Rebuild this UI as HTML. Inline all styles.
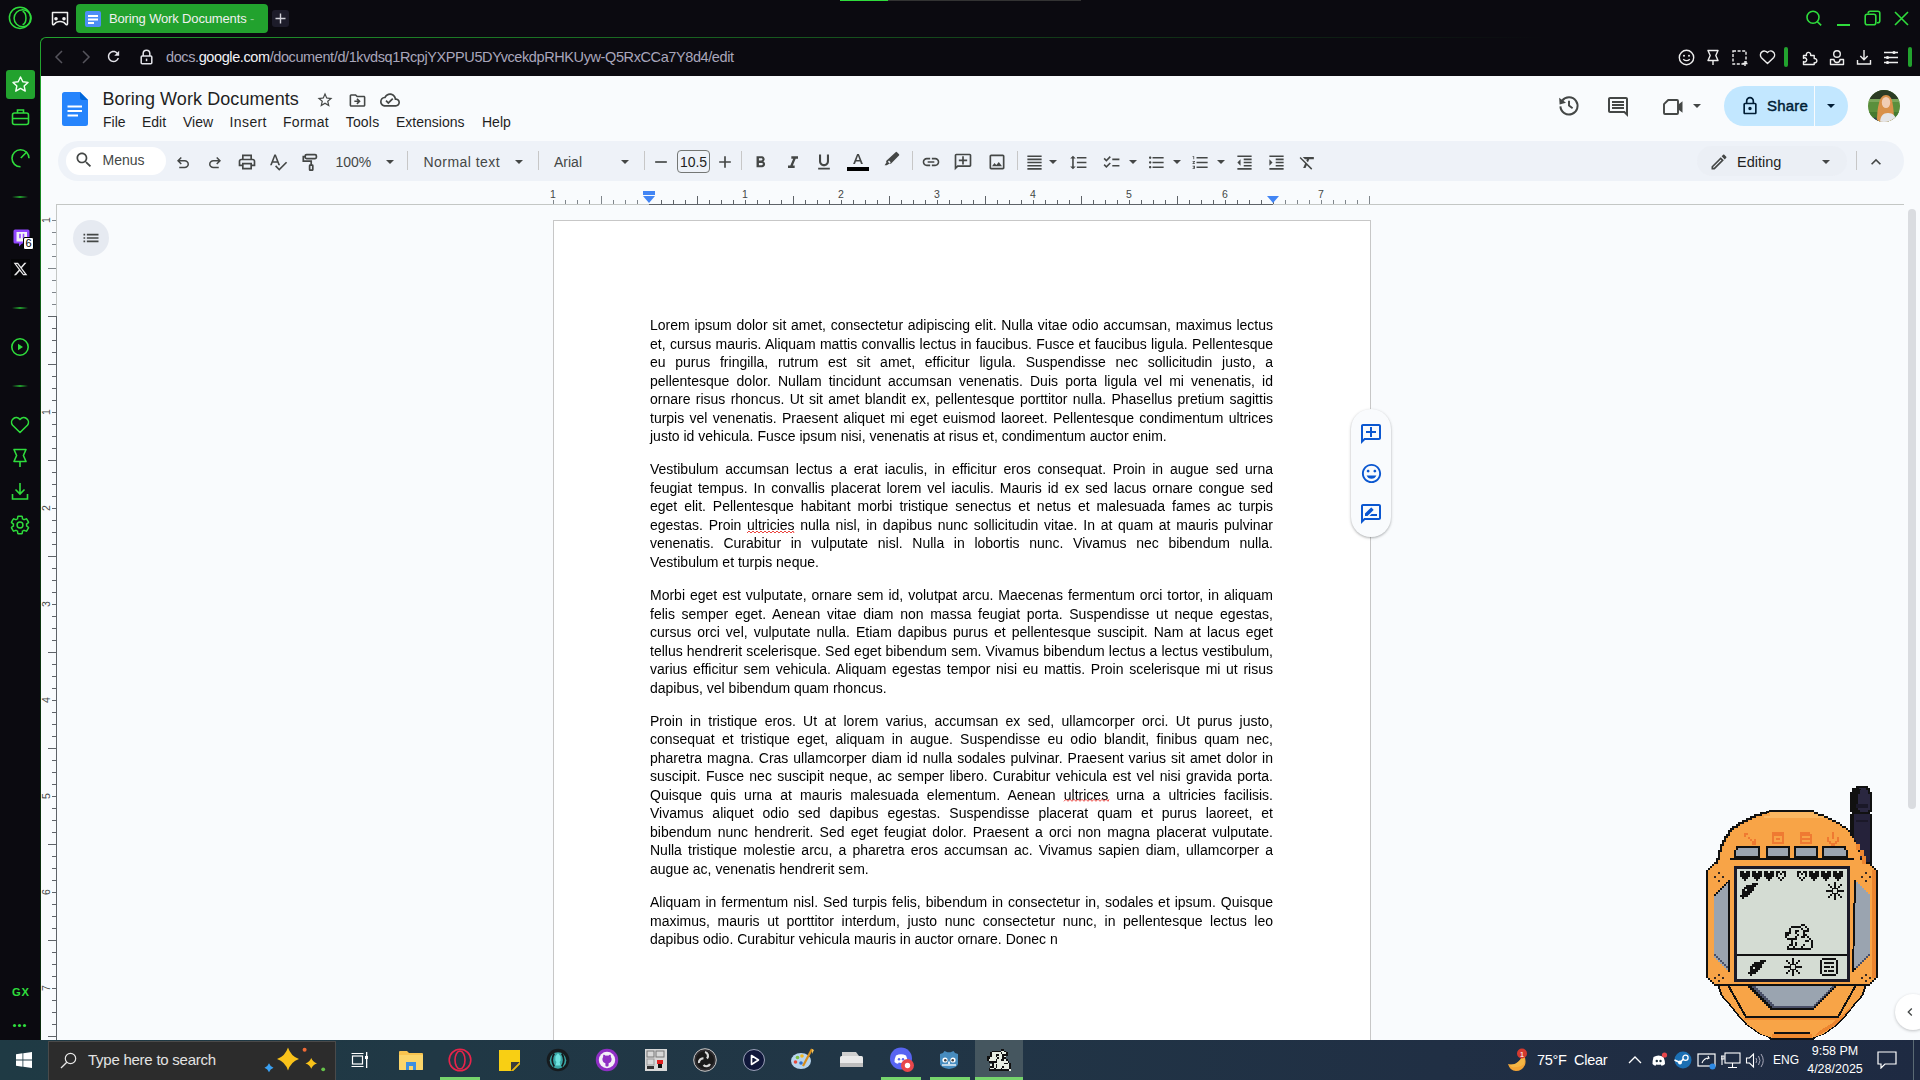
<!DOCTYPE html>
<html><head><meta charset="utf-8">
<style>
*{box-sizing:border-box;margin:0;padding:0}
html,body{width:1920px;height:1080px;overflow:hidden;background:#0b0a10;font-family:"Liberation Sans",sans-serif}
.a{position:absolute}
svg{display:block}
.gx{stroke:#2fdc3c;fill:none;stroke-width:1.6}
.ic{fill:#444746}
.mi{position:absolute;font-size:14px;color:#1f1f1f;top:114px;line-height:17px}
.tb{position:absolute;font-size:14px;color:#444746;line-height:17px}
.sep{position:absolute;width:1px;height:19px;top:151px;background:#c7c7c7}
.dd{position:absolute;width:0;height:0;border-left:4.5px solid transparent;border-right:4.5px solid transparent;border-top:4.5px solid #444746}
.doc{position:absolute;left:650px;width:623px;font-size:14px;line-height:18.5px;color:#000;will-change:transform}
.doc div{text-align:justify;text-align-last:justify;white-space:nowrap;height:18.5px}
.doc div.l{text-align-last:left}
.sq{}
</style></head><body>
<!-- TAB BAR -->
<div id="tabbar" class="a" style="left:0;top:0;width:1920px;height:37px;background:#0b0a10"></div>
<div class="a" style="left:840px;top:0;width:48px;height:1px;background:#2fdc3c"></div>
<div class="a" style="left:888px;top:0;width:193px;height:1px;background:#333"></div>
<!-- opera logo -->
<svg class="a" style="left:0;top:0" width="40" height="36" viewBox="0 0 40 36"><circle cx="20" cy="17.8" r="10.6" fill="none" stroke="#2fdc3c" stroke-width="1.5"/><circle cx="22.6" cy="18.2" r="8.5" fill="none" stroke="#2fdc3c" stroke-width="1.5"/><path d="M22.6 11.2A4.4 7 0 0 1 22.6 24.8" fill="none" stroke="#2fdc3c" stroke-width="1.5"/></svg>
<!-- gamepad -->
<svg class="a" style="left:48px;top:8px" width="24" height="20" viewBox="0 0 24 20"><path d="M4.5 4.5h15v11.5a.8.8 0 0 1-1.3.6L15.8 14.4q-3.8-1.6-7.6 0L5.8 16.6a.8.8 0 0 1-1.3-.6z" fill="none" stroke="#f0f0f0" stroke-width="1.5" stroke-linejoin="round"/><circle cx="8" cy="10.7" r="1.8" fill="#f0f0f0"/><circle cx="16" cy="10.7" r="1.8" fill="#f0f0f0"/></svg>
<!-- tab -->
<div class="a" style="left:76px;top:4px;width:192px;height:29px;background:#22a22e;border-radius:4px"></div>
<svg class="a" style="left:85px;top:11px" width="16" height="16" viewBox="0 0 16 16"><rect width="16" height="16" rx="2" fill="#4d8ef7"/><rect x="3" y="4" width="10" height="2" fill="#fff"/><rect x="3" y="7.5" width="10" height="2" fill="#fff"/><rect x="3" y="11" width="6" height="2" fill="#fff"/></svg>
<div id="tabt" class="a" style="left:109px;top:11px;font-size:13px;letter-spacing:-0.15px;color:#f0f0f0;line-height:16px;white-space:nowrap">Boring Work Documents <span style="color:#8fcf94">-</span></div>
<div class="a" style="left:272px;top:10px;width:17px;height:17px;background:#1d1c2a;border-radius:3px"></div>
<svg class="a" style="left:274px;top:12px" width="13" height="13" viewBox="0 0 13 13"><path d="M6.5 1.5v10M1.5 6.5h10" stroke="#d0d0d8" stroke-width="1.4"/></svg>
<!-- window controls -->
<svg class="a" style="left:1804px;top:9px" width="20" height="20" viewBox="0 0 20 20"><circle cx="9" cy="8.3" r="6" class="gx" stroke-width="1.5"/><path d="M13.3 12.6L17.2 16.3" class="gx" stroke-width="1.5"/></svg>
<div class="a" style="left:1837px;top:24px;width:13px;height:1.5px;background:#2fdc3c"></div>
<svg class="a" style="left:1864px;top:10px" width="17" height="17" viewBox="0 0 17 17"><rect x="1.2" y="4.2" width="10.6" height="10.6" rx="2" class="gx" stroke-width="1.4"/><path d="M4.2 3.6V3.2a2 2 0 0 1 2-2h7.6a2 2 0 0 1 2 2v7.6a2 2 0 0 1-2 2h-1" class="gx" stroke-width="1.4"/></svg>
<svg class="a" style="left:1894px;top:11px" width="15" height="15" viewBox="0 0 15 15"><path d="M1 1L14 14M14 1L1 14" class="gx" stroke-width="1.4"/></svg>

<!-- BROWSER FRAME -->
<div class="a" style="left:40px;top:37px;width:1890px;height:1010px;background:#0b0a10"></div>
<div class="a" style="left:40px;top:42px;width:1px;height:998px;background:linear-gradient(180deg,#22a22e 0px,#22a22e 60px,#157a1e 200px,#0c3a10 360px,#0a2a0c 1000px)"></div>
<div class="a" style="left:46px;top:37px;width:1874px;height:1px;background:linear-gradient(90deg,#22a22e 0%,#1a6a22 30%,#123818 55%,#0b0a10 80%)"></div>
<div class="a" style="left:40px;top:37px;width:8px;height:8px;border-left:1px solid #22a22e;border-top:1px solid #22a22e;border-top-left-radius:6px"></div>
<div class="a" style="left:41px;top:76px;width:1879px;height:964px;background:#f9fbfd"></div>


<!-- ADDRESS BAR -->
<svg class="a" style="left:53px;top:50px" width="12" height="14" viewBox="0 0 12 14"><path d="M9 1L3 7l6 6" fill="none" stroke="#55545c" stroke-width="1.5"/></svg>
<svg class="a" style="left:80px;top:50px" width="12" height="14" viewBox="0 0 12 14"><path d="M3 1l6 6-6 6" fill="none" stroke="#55545c" stroke-width="1.5"/></svg>
<svg class="a" style="left:105px;top:48px" width="17" height="17" viewBox="0 0 24 24"><path d="M17.65 6.35C16.2 4.9 14.21 4 12 4c-4.42 0-7.99 3.58-7.99 8s3.57 8 7.99 8c3.73 0 6.84-2.55 7.73-6h-2.08c-.82 2.33-3.04 4-5.65 4-3.31 0-6-2.69-6-6s2.69-6 6-6c1.66 0 3.14.69 4.22 1.78L13 11h7V4l-2.35 2.35z" fill="#e4e4ea"/></svg>
<svg class="a" style="left:140px;top:49px" width="13" height="16" viewBox="0 0 13 16"><path d="M3.2 7V4.6a3.3 3.3 0 0 1 6.6 0V7" fill="none" stroke="#e4e4ea" stroke-width="1.5"/><rect x="1.2" y="7" width="10.6" height="7.8" rx="1" fill="none" stroke="#e4e4ea" stroke-width="1.5"/><rect x="5.8" y="9.6" width="1.5" height="2.6" fill="#e4e4ea"/></svg>
<div id="url" class="a" style="left:166px;top:48px;font-size:14.5px;line-height:18px;color:#a9a6bb;white-space:nowrap;letter-spacing:-0.4px">docs.<span style="color:#f2f2f6">google.com</span>/document/d/1kvdsq1RcpjYXPPU5DYvcekdpRHKUyw-Q5RxCCa7Y8d4/edit</div>
<!-- right address icons -->
<svg class="a" style="left:1678px;top:49px" width="17" height="17" viewBox="0 0 17 17"><circle cx="8.5" cy="8.5" r="7.2" fill="none" stroke="#eee" stroke-width="1.4"/><circle cx="6" cy="6.8" r="1" fill="#eee"/><circle cx="11" cy="6.8" r="1" fill="#eee"/><path d="M5.2 10.2q3.3 2.8 6.6 0" fill="none" stroke="#eee" stroke-width="1.3"/></svg>
<svg class="a" style="left:1705px;top:49px" width="16" height="17" viewBox="0 0 16 17"><path d="M3 1.5h10l-2.2 5 2.2 5H3l2.2-5z" fill="none" stroke="#eee" stroke-width="1.4" stroke-linejoin="round"/><path d="M8 11.5v4.5" stroke="#eee" stroke-width="1.4"/></svg>
<svg class="a" style="left:1732px;top:50px" width="17" height="17" viewBox="0 0 17 17"><path d="M1 1h13v13H1z" fill="none" stroke="#eee" stroke-width="1.4" stroke-dasharray="3 1.6"/><path d="M13 11v5M10.5 13.5h5" stroke="#eee" stroke-width="1.4"/></svg>
<svg class="a" style="left:1759px;top:50px" width="17" height="15" viewBox="0 0 17 15"><path d="M8.5 13.5L2.2 7.4A3.6 3.6 0 0 1 8.5 2.6a3.6 3.6 0 0 1 6.3 4.8z" fill="none" stroke="#eee" stroke-width="1.4" stroke-linejoin="round"/></svg>
<div class="a" style="left:1784px;top:47px;width:4px;height:20px;background:#22a22e;border-radius:2px"></div>
<svg class="a" style="left:1802px;top:49px" width="18" height="17" viewBox="0 0 18 17"><path d="M1.5 6.5h3a2.2 2.2 0 1 1 4.2-.8V6.5h3.5v3a2.2 2.2 0 1 1 0 4.3V15.5H1.5v-3a2 2 0 1 0 0-3.2z" fill="none" stroke="#eee" stroke-width="1.4" stroke-linejoin="round"/></svg>
<svg class="a" style="left:1829px;top:49px" width="16" height="17" viewBox="0 0 16 17"><circle cx="8" cy="5" r="3.3" fill="none" stroke="#eee" stroke-width="1.4"/><path d="M1.5 10.5h3.5a3 3 0 0 0 6 0h3.5v5h-13z" fill="none" stroke="#eee" stroke-width="1.4" stroke-linejoin="round"/></svg>
<svg class="a" style="left:1856px;top:49px" width="16" height="17" viewBox="0 0 16 17"><path d="M8 1v9.5M4.3 7l3.7 3.7L11.7 7M1.5 11v4h13v-4" fill="none" stroke="#eee" stroke-width="1.4"/></svg>
<svg class="a" style="left:1883px;top:50px" width="16" height="15" viewBox="0 0 16 15"><path d="M1 2.5h14M1 7.5h14M1 12.5h14" stroke="#eee" stroke-width="1.4"/><circle cx="11" cy="2.5" r="1.6" fill="#eee"/><circle cx="4.5" cy="7.5" r="1.6" fill="#eee"/><circle cx="4.5" cy="12.5" r="1.6" fill="#eee"/></svg>
<div class="a" style="left:1908px;top:47px;width:4px;height:20px;background:#22a22e;border-radius:2px"></div>

<!-- LEFT SIDEBAR -->
<div class="a" style="left:6px;top:70px;width:29px;height:29px;background:#22a22e;border-radius:3px"></div>
<svg class="a" style="left:11px;top:75px" width="19" height="19" viewBox="0 0 24 24"><path d="M12 2.5l2.9 6.1 6.6.7-4.9 4.5 1.4 6.6L12 17l-6 3.4 1.4-6.6-4.9-4.5 6.6-.7z" fill="none" stroke="#f4fff4" stroke-width="1.8" stroke-linejoin="round"/></svg>
<svg class="a" style="left:11px;top:108px" width="19" height="18" viewBox="0 0 19 18"><rect x="1.5" y="5" width="16" height="11.5" rx="2" class="gx"/><path d="M6.5 5V2h6v3M1.5 10.5h16" class="gx"/></svg>
<svg class="a" style="left:10px;top:147px" width="20" height="22" viewBox="0 0 20 22"><path d="M10.5 19.8A8.5 8.5 0 1 1 19 11.3" class="gx" stroke-width="1.6"/><path d="M10.8 11L17 4.8" class="gx" stroke-width="1.6"/></svg>
<div class="a" style="left:12px;top:196px;width:16px;height:2px;background:linear-gradient(90deg,transparent,#22a22e,transparent)"></div>
<svg class="a" style="left:12px;top:228px" width="20" height="22" viewBox="0 0 20 22"><path d="M3 1.5h13a1.5 1.5 0 0 1 1.5 1.5v8.5l-4 4h-3.5L7 18.5v-3H3a1.5 1.5 0 0 1-1.5-1.5V3A1.5 1.5 0 0 1 3 1.5z" fill="#9146ff"/><path d="M4.5 4h10.5v7l-2.5 2.5H4.5z" fill="#f2f0f8"/><path d="M8 5.8v4.5M11.5 5.8v4.5" stroke="#9146ff" stroke-width="1.6"/></svg>
<div class="a" style="left:23px;top:237px;width:11px;height:13px;background:#fff;border:1px solid #000;border-radius:2px;font-size:11px;line-height:11px;text-align:center;color:#000">6</div>
<div class="a" style="left:11px;top:259px;width:19px;height:20px;background:#050507"></div>
<svg class="a" style="left:13px;top:262px" width="15" height="14" viewBox="0 0 24 22"><path d="M18.2 1h3.4l-7.4 8.5L23 21h-6.8l-5.3-7-6.1 7H1.4l7.9-9L1 1h7l4.8 6.4zM17 19h1.9L6.9 3H4.9z" fill="#e8e8e8"/></svg>
<div class="a" style="left:12px;top:307px;width:16px;height:2px;background:linear-gradient(90deg,transparent,#22a22e,transparent)"></div>
<svg class="a" style="left:10px;top:337px" width="20" height="20" viewBox="0 0 20 20"><circle cx="10" cy="10" r="8.2" class="gx" stroke-width="1.6"/><path d="M8 6.8v6.4l5-3.2z" fill="#2fdc3c"/></svg>
<div class="a" style="left:12px;top:385px;width:16px;height:2px;background:linear-gradient(90deg,transparent,#22a22e,transparent)"></div>
<svg class="a" style="left:10px;top:416px" width="20" height="18" viewBox="0 0 20 18"><path d="M10 16.5L2.6 9.3A4.3 4.3 0 0 1 10 3.4a4.3 4.3 0 0 1 7.4 5.9z" class="gx" stroke-width="1.6" stroke-linejoin="round"/></svg>
<svg class="a" style="left:11px;top:448px" width="18" height="20" viewBox="0 0 18 20"><path d="M3 1.5h12l-2.6 6 2.6 6H3l2.6-6z" class="gx" stroke-width="1.6" stroke-linejoin="round"/><path d="M9 13.5v5.5" class="gx" stroke-width="1.6"/></svg>
<svg class="a" style="left:11px;top:482px" width="18" height="18" viewBox="0 0 18 18"><path d="M9 1v11M4.5 7.5L9 12l4.5-4.5M1.5 12v5h15v-5" class="gx" stroke-width="1.6"/></svg>
<svg class="a" style="left:9px;top:514px" width="22" height="22" viewBox="0 0 24 24"><path d="M19.14 12.94c.04-.3.06-.61.06-.94 0-.32-.02-.64-.07-.94l2.03-1.58a.49.49 0 0 0 .12-.61l-1.92-3.32a.488.488 0 0 0-.59-.22l-2.39.96c-.5-.38-1.03-.7-1.62-.94l-.36-2.54a.484.484 0 0 0-.48-.41h-3.84c-.24 0-.43.17-.47.41l-.36 2.54c-.59.24-1.13.57-1.62.94l-2.39-.96c-.22-.08-.47 0-.59.22L2.74 8.87c-.12.21-.08.47.12.61l2.03 1.58c-.05.3-.09.63-.09.94s.02.64.07.94l-2.03 1.58a.49.49 0 0 0-.12.61l1.92 3.32c.12.22.37.29.59.22l2.39-.96c.5.38 1.03.7 1.62.94l.36 2.54c.05.24.24.41.48.41h3.84c.24 0 .44-.17.47-.41l.36-2.54c.59-.24 1.13-.56 1.62-.94l2.39.96c.22.08.47 0 .59-.22l1.92-3.32c.12-.22.07-.47-.12-.61l-2.01-1.58z" class="gx" stroke-width="1.5"/><circle cx="12" cy="12" r="3.2" class="gx" stroke-width="1.5"/></svg>
<div class="a" style="left:11.5px;top:987px;font-size:10px;font-weight:bold;color:#2fdc3c;line-height:11px;letter-spacing:0.6px;transform:scaleX(1.12);transform-origin:left">GX</div>
<svg class="a" style="left:12px;top:1023px" width="16" height="5" viewBox="0 0 16 5"><circle cx="2.5" cy="2.5" r="1.6" fill="#2fdc3c"/><circle cx="7.5" cy="2.5" r="1.6" fill="#2fdc3c"/><circle cx="12.5" cy="2.5" r="1.6" fill="#2fdc3c"/></svg>


<!-- DOCS HEADER -->
<svg class="a" style="left:62px;top:92px" width="26" height="34" viewBox="0 0 26 34"><path d="M2.5 0h15.5l8 8v23.5a2.5 2.5 0 0 1-2.5 2.5h-21A2.5 2.5 0 0 1 0 31.5v-29A2.5 2.5 0 0 1 2.5 0z" fill="#2684fc"/><path d="M18 0l8 8h-5.5A2.5 2.5 0 0 1 18 5.5z" fill="#0066da"/><rect x="5.5" y="13.5" width="14.5" height="2" fill="#fff"/><rect x="5.5" y="18" width="14.5" height="2" fill="#fff"/><rect x="5.5" y="22.5" width="10.5" height="2" fill="#fff"/></svg>
<div id="title" class="a" style="left:102.5px;top:88px;font-size:18px;letter-spacing:0.08px;line-height:22px;color:#1f1f1f;white-space:nowrap">Boring Work Documents</div>
<svg class="a" style="left:316px;top:91px" width="18" height="18" viewBox="0 0 24 24"><path class="ic" d="M22 9.24l-7.19-.62L12 2 9.19 8.63 2 9.24l5.46 4.73L5.82 21 12 17.27 18.18 21l-1.63-7.03L22 9.24zM12 15.4l-3.76 2.27 1-4.28-3.32-2.88 4.38-.38L12 6.1l1.71 4.04 4.38.38-3.32 2.88 1 4.28L12 15.4z"/></svg>
<svg class="a" style="left:348px;top:91px" width="19" height="19" viewBox="0 0 24 24"><path class="ic" d="M20 6h-8l-2-2H4c-1.1 0-1.99.9-1.99 2L2 18c0 1.1.9 2 2 2h16c1.1 0 2-.9 2-2V8c0-1.1-.9-2-2-2zm0 12H4V6h5.17l2 2H20v10zm-7.84-6H8v2h4.16l-1.59 1.59L11.99 17 16 13.01 11.99 9l-1.41 1.41L12.16 12z"/></svg>
<svg class="a" style="left:380px;top:90px" width="20" height="20" viewBox="0 0 24 24"><path class="ic" d="M19.35 10.04C18.67 6.59 15.64 4 12 4 9.11 4 6.6 5.64 5.35 8.04 2.34 8.36 0 10.91 0 14c0 3.31 2.69 6 6 6h13c2.76 0 5-2.24 5-5 0-2.64-2.05-4.78-4.65-4.96zM19 18H6c-2.21 0-4-1.790-4-4 0-2.05 1.53-3.76 3.56-3.97l1.07-.11.5-.95C8.08 7.14 9.94 6 12 6c2.620 0 4.88 1.86 5.39 4.43l.3 1.5 1.53.11c1.56.1 2.78 1.41 2.78 2.96 0 1.65-1.35 3-3 3zm-9-3.82l-2.09-2.09L6.5 13.5 10 17l6.01-6.01-1.41-1.41z"/></svg>
<div id="m_file" class="mi" style="left:103px">File</div>
<div id="m_edit" class="mi" style="left:142px">Edit</div>
<div id="m_view" class="mi" style="left:183px">View</div>
<div id="m_ins" class="mi" style="left:229.5px;letter-spacing:0.4px">Insert</div>
<div id="m_fmt" class="mi" style="left:283px;letter-spacing:0.28px">Format</div>
<div id="m_tools" class="mi" style="left:345.7px;letter-spacing:0.2px">Tools</div>
<div id="m_ext" class="mi" style="left:396px">Extensions</div>
<div id="m_help" class="mi" style="left:482px">Help</div>
<!-- history, comments, meet -->
<svg class="a" style="left:1557px;top:93px" width="24" height="24" viewBox="0 0 24 24"><path d="M5.2 7.6A8.6 8.6 0 1 1 3.4 13.4" fill="none" stroke="#444746" stroke-width="2"/><path d="M2.2 4.8l.4 6.6 6.4-1.6z" fill="#444746"/><path d="M12 7.8v4.8l3.6 2.6" fill="none" stroke="#444746" stroke-width="1.9"/></svg>
<svg class="a" style="left:1606px;top:95px" width="24" height="24" viewBox="0 0 24 24"><path class="ic" d="M21.99 4c0-1.1-.89-2-1.99-2H4c-1.1 0-2 .9-2 2v12c0 1.1.9 2 2 2h14l4 4-.01-18zM20 4v13.17L18.83 16H4V4h16zM6 12h12v2H6zm0-3h12v2H6zm0-3h12v2H6z"/></svg>
<svg class="a" style="left:1661px;top:95px" width="24" height="24" viewBox="0 0 24 24"><path d="M3 9.2L7.2 5H16a1 1 0 0 1 1 1v12a1 1 0 0 1-1 1H4a1 1 0 0 1-1-1z" fill="none" stroke="#444746" stroke-width="1.9" stroke-linejoin="round"/><path d="M17 9.8l4.5-3.6v11.6L17 14.2z" fill="#444746"/></svg>
<div class="dd" style="left:1692.5px;top:104.3px"></div>
<!-- share -->
<div class="a" style="left:1724px;top:86px;width:124px;height:40px;background:#c2e7ff;border-radius:20px"></div>
<div class="a" style="left:1814px;top:86px;width:1px;height:40px;background:#f9fbfd"></div>
<svg class="a" style="left:1740px;top:96px" width="20" height="20" viewBox="0 0 24 24"><path fill="#001d35" d="M18 8h-1V6c0-2.76-2.24-5-5-5S7 3.240 7 6v2H6c-1.1 0-2 .9-2 2v10c0 1.1.9 2 2 2h12c1.1 0 2-.9 2-2V10c0-1.1-.9-2-2-2zM9 6c0-1.66 1.34-3 3-3s3 1.34 3 3v2H9V6zm9 14H6V10h12v10zm-6-3c1.1 0 2-.9 2-2s-.9-2-2-2-2 .9-2 2 .9 2 2 2z"/></svg>
<div id="share" class="a" style="left:1767px;top:97px;font-size:15px;line-height:18px;color:#001d35;-webkit-text-stroke:0.45px #001d35;white-space:nowrap;letter-spacing:0.2px">Share</div>
<div class="dd" style="left:1826.5px;top:104.3px;border-top-color:#001d35"></div>
<!-- avatar -->
<svg class="a" style="left:1868px;top:90px" width="32" height="32" viewBox="0 0 32 32"><defs><clipPath id="avc"><circle cx="16" cy="16" r="16"/></clipPath></defs><g clip-path="url(#avc)"><rect width="32" height="32" fill="#5a8f3c"/><rect width="32" height="9" fill="#2c3b24"/><rect y="9" width="32" height="3" fill="#7aa55a"/><rect y="22" width="32" height="10" fill="#467a30"/><path d="M9 32c0-7 .5-14 2-19 1-5 3.5-8 7-8s6 3 6.5 8c1 5 1.5 12 1.5 19z" fill="#d9914a"/><ellipse cx="18" cy="12.5" rx="4.2" ry="5.5" fill="#f1cdb3"/><path d="M12 32c.5-6 3-9 8-9s8 3 9 9z" fill="#e4e5e8"/><path d="M4 32l3-5 4 5z" fill="#2a3a60"/></g></svg>


<!-- TOOLBAR -->
<div class="a" style="left:58px;top:141px;width:1846px;height:40px;background:#eef2f8;border-radius:20px"></div>
<div class="a" style="left:66px;top:147px;width:100px;height:28px;background:#fff;border-radius:14px"></div>
<svg class="a" style="left:74px;top:150px" width="20" height="20" viewBox="0 0 24 24"><path class="ic" d="M15.5 14h-.79l-.28-.27C15.410 12.59 16 11.11 16 9.5 16 5.91 13.09 3 9.5 3S3 5.91 3 9.5 5.91 16 9.5 16c1.61 0 3.09-.59 4.23-1.57l.27.28v.79l5 4.99L20.49 19l-4.99-5zm-6 0C7.01 14 5 11.99 5 9.5S7.01 5 9.5 5 14 7.01 14 9.5 11.99 14 9.5 14z"/></svg>
<div id="menus" class="tb" style="left:102.5px;top:151.5px">Menus</div>
<svg class="a" style="left:174px;top:154px" width="18" height="18" viewBox="0 -960 960 960"><path class="ic" d="M280-200v-80h284q63 0 109.5-40T720-420q0-60-46.5-100T564-560H312l104 104-56 56-200-200 200-200 56 56-104 104h252q97 0 166.5 63T800-420q0 94-69.5 157T564-200H280Z"/></svg>
<svg class="a" style="left:206px;top:154px" width="18" height="18" viewBox="0 -960 960 960"><path class="ic" d="M280-200v-80h284q63 0 109.5-40T720-420q0-60-46.5-100T564-560H312l104 104-56 56-200-200 200-200 56 56-104 104h252q97 0 166.5 63T800-420q0 94-69.5 157T564-200H280Z" transform="translate(960 0) scale(-1 1)"/></svg>
<svg class="a" style="left:237px;top:152px" width="20" height="20" viewBox="0 0 24 24"><path class="ic" d="M19 8h-1V3H6v5H5c-1.66 0-3 1.34-3 3v6h4v4h12v-4h4v-6c0-1.66-1.34-3-3-3zM8 5h8v3H8V5zm8 14H8v-4h8v4zm2-4v-2H6v2H4v-4c0-.55.45-1 1-1h14c.55 0 1 .45 1 1v4h-2z" /></svg>
<svg class="a" style="left:268px;top:152px" width="20" height="20" viewBox="0 0 24 24"><path class="ic" d="M12.45 16h2.09L9.43 3H7.57L2.46 16h2.09l1.12-3h5.64l1.14 3zm-6.02-5L8.5 5.48 10.57 11H6.43zm15.16.59l-8.09 8.09L9.83 16l-1.41 1.41 5.09 5.09L23 13l-1.41-1.41z" /></svg>
<svg class="a" style="left:300px;top:151px" width="20" height="20" viewBox="0 0 20 20"><rect x="5.2" y="3.6" width="11.2" height="4" rx="1.3" fill="none" stroke="#444746" stroke-width="1.7"/><path d="M5.2 5.6H3.3V10.2H11.2V14.2" fill="none" stroke="#444746" stroke-width="1.7"/><rect x="9.6" y="14.2" width="3.2" height="5" rx="0.6" fill="none" stroke="#444746" stroke-width="1.7"/></svg>
<div id="zoom" class="tb" style="left:335.5px;top:154px">100%</div>
<div class="dd" style="left:385.5px;top:160.1px"></div>
<div class="sep" style="left:407px"></div>
<div id="normal" class="tb" style="left:423.5px;top:154px;letter-spacing:0.45px">Normal text</div>
<div class="dd" style="left:514.5px;top:160.1px"></div>
<div class="sep" style="left:538px"></div>
<div id="arial" class="tb" style="left:554px;top:154px">Arial</div>
<div class="dd" style="left:620.5px;top:160.1px"></div>
<div class="sep" style="left:644px"></div>
<svg class="a" style="left:651px;top:152px" width="20" height="20" viewBox="0 0 24 24"><path class="ic" d="M19 13H5v-2h14v2z" /></svg>
<div class="a" style="left:676.5px;top:149.5px;width:33.5px;height:23.5px;border:1px solid #747775;border-radius:4px"></div>
<div id="fsz" class="tb" style="left:677px;top:154px;width:33px;text-align:center;color:#1f1f1f">10.5</div>
<svg class="a" style="left:715px;top:152px" width="20" height="20" viewBox="0 0 24 24"><path class="ic" d="M19 13h-6v6h-2v-6H5v-2h6V5h2v6h6v2z" /></svg>
<div class="sep" style="left:741px"></div>
<svg class="a" style="left:751px;top:152.5px" width="19" height="19" viewBox="0 0 24 24"><path class="ic" d="M15.6 10.79c.97-.67 1.65-1.77 1.65-2.79 0-2.26-1.75-4-4-4H7v14h7.04c2.09 0 3.71-1.7 3.71-3.79 0-1.52-.86-2.82-2.15-3.42zM10 6.5h3c.83 0 1.5.67 1.5 1.5s-.67 1.5-1.5 1.5h-3v-3zm3.5 9H10v-3h3.5c.83 0 1.5.67 1.5 1.5s-.67 1.5-1.5 1.5z" /></svg>
<svg class="a" style="left:782.5px;top:153px" width="20" height="20" viewBox="0 0 24 24"><path class="ic" d="M10 4v3h2.21l-3.42 8H6v3h8v-3h-2.21l3.42-8H18V4z" /></svg>
<svg class="a" style="left:814px;top:152px" width="20" height="20" viewBox="0 0 24 24"><path class="ic" d="M12 17c3.31 0 6-2.69 6-6V3h-2.5v8c0 1.93-1.57 3.5-3.5 3.5S8.5 12.93 8.5 11V3H6v8c0 3.31 2.69 6 6 6zm-7 2v2h14v-2H5z" /></svg>
<svg class="a" style="left:847px;top:151px" width="22" height="20" viewBox="0 0 22 20"><path class="ic" d="M10.1 3h1.8l4 10h-1.9l-.9-2.4H8.9L8 13H6.1zM9.5 9h3L11 4.8z"/><rect x="0" y="16" width="22" height="4" fill="#000"/></svg>
<svg class="a" style="left:881px;top:150px" width="21" height="21" viewBox="0 0 21 21"><path d="M14.6 2.2a1 1 0 0 1 1.4 0l2 2a1 1 0 0 1 0 1.4L9.9 13.7 8.6 13.4 5.8 15.2H3.6L5.4 12.4 5.1 11.1z" fill="#444746"/><path d="M8 10.6l1.7 1.7-1.1 1.1-1.7-1.7z" fill="#eef2f8"/></svg>
<div class="sep" style="left:912px"></div>
<svg class="a" style="left:921px;top:152px" width="20" height="20" viewBox="0 0 24 24"><path class="ic" d="M3.9 12c0-1.71 1.39-3.1 3.1-3.1h4V7H7c-2.76 0-5 2.24-5 5s2.24 5 5 5h4v-1.9H7c-1.71 0-3.1-1.39-3.1-3.1zM8 13h8v-2H8v2zm9-6h-4v1.9h4c1.71 0 3.1 1.39 3.1 3.1s-1.39 3.1-3.1 3.1h-4V17h4c2.76 0 5-2.24 5-5s-2.24-5-5-5z" /></svg>
<svg class="a" style="left:953px;top:152px" width="20" height="20" viewBox="0 0 24 24"><path class="ic" d="M20 2H4c-1.1 0-2 .9-2 2v18l4-4h14c1.1 0 2-.9 2-2V4c0-1.1-.9-2-2-2zm0 14H5.17L4 17.17V4h16v12zM13 5h-2v4H7v2h4v4h2v-4h4V9h-4z" /></svg>
<svg class="a" style="left:987px;top:152px" width="20" height="20" viewBox="0 0 24 24"><path class="ic" d="M19 5v14H5V5h14m0-2H5c-1.1 0-2 .9-2 2v14c0 1.1.9 2 2 2h14c1.1 0 2-.9 2-2V5c0-1.1-.9-2-2-2zm-4.86 8.86l-3 3.87L9 13.14 6 17h12l-3.86-5.14z" /></svg>
<div class="sep" style="left:1017px"></div>
<svg class="a" style="left:1024.5px;top:152.5px" width="19" height="19" viewBox="0 0 24 24"><path class="ic" d="M3 21h18v-2H3v2zm0-4h18v-2H3v2zm0-4h18v-2H3v2zm0-4h18V7H3v2zm0-6v2h18V3H3z" /></svg>
<div class="dd" style="left:1048.5px;top:160.1px"></div>
<svg class="a" style="left:1068.5px;top:152.5px" width="19" height="19" viewBox="0 0 24 24"><path class="ic" d="M6 7h2.5L5 3.5 1.5 7H4v10H1.5L5 20.5 8.5 17H6V7zm4-2v2h12V5H10zm0 14h12v-2H10v2zm0-6h12v-2H10v2z" /></svg>
<svg class="a" style="left:1101.5px;top:152.5px" width="19" height="19" viewBox="0 0 24 24"><path class="ic" d="M22 7h-9v2h9V7zm0 8h-9v2h9v-2zM5.54 11L2 7.46l1.41-1.41 2.12 2.12 4.24-4.24 1.41 1.41L5.54 11zm0 8L2 15.46l1.41-1.41 2.12 2.12 4.24-4.24 1.41 1.41L5.54 19z" /></svg>
<div class="dd" style="left:1128.5px;top:160.1px"></div>
<svg class="a" style="left:1146.5px;top:152.5px" width="19" height="19" viewBox="0 0 24 24"><path class="ic" d="M4 10.5c-.83 0-1.5.67-1.5 1.5s.67 1.5 1.5 1.5 1.5-.67 1.5-1.5-.67-1.5-1.5-1.5zm0-6c-.83 0-1.5.67-1.5 1.5S3.17 7.5 4 7.5 5.5 6.830 5.5 6 4.83 4.5 4 4.5zm0 12c-.83 0-1.5.68-1.5 1.5s.68 1.5 1.5 1.5 1.5-.68 1.5-1.5-.67-1.5-1.5-1.5zM7 19h14v-2H7v2zm0-6h14v-2H7v2zm0-8v2h14V5H7z" /></svg>
<div class="dd" style="left:1172.5px;top:160.1px"></div>
<svg class="a" style="left:1190.5px;top:152.5px" width="19" height="19" viewBox="0 0 24 24"><path class="ic" d="M2 17h2v.5H3v1h1v.5H2v1h3v-4H2v1zm1-9h1V4H2v1h1v3zm-1 3h1.8L2 13.1v.9h3v-1H3.2L5 10.9V10H2v1zm5-6v2h14V5H7zm0 14h14v-2H7v2zm0-6h14v-2H7v2z" /></svg>
<div class="dd" style="left:1216.5px;top:160.1px"></div>
<svg class="a" style="left:1234.5px;top:152.5px" width="19" height="19" viewBox="0 0 24 24"><path class="ic" d="M11 17h10v-2H11v2zm-8-5l4 4V8l-4 4zm0 9h18v-2H3v2zM3 3v2h18V3H3zm8 6h10V7H11v2zm0 4h10v-2H11v2z" /></svg>
<svg class="a" style="left:1266.5px;top:152.5px" width="19" height="19" viewBox="0 0 24 24"><path class="ic" d="M3 21h18v-2H3v2zM3 8v8l4-4-4-4zm8 9h10v-2H11v2zM3 3v2h18V3H3zm8 6h10V7H11v2zm0 4h10v-2H11v2z" /></svg>
<svg class="a" style="left:1297.5px;top:152.5px" width="19" height="19" viewBox="0 0 24 24"><path class="ic" d="M3.27 5L2 6.27l6.97 6.97L6.5 19h3l1.57-3.66L16.73 21 18 19.73 3.55 5.27 3.27 5zM6 5v.18L8.82 8h2.4l-.72 1.68 2.1 2.1L14.21 8H20V5H6z" /></svg>
<div class="a" style="left:1697px;top:146px;width:150px;height:30px;background:#e9edf4;border-radius:15px;opacity:.6"></div>
<svg class="a" style="left:1709px;top:152px" width="20" height="20" viewBox="0 0 24 24"><path class="ic" d="M3 17.25V21h3.75L17.81 9.94l-3.75-3.75L3 17.25zM5.92 19H5v-.92l9.06-9.06.92.92L5.92 19zM20.71 5.63l-2.34-2.34c-.2-.2-.45-.29-.71-.29s-.51.1-.7.29l-1.83 1.83 3.75 3.75 1.83-1.83c.39-.39.39-1.02 0-1.41z" /></svg>
<div id="editing" class="tb" style="left:1737px;top:154px;color:#1f1f1f;font-size:14.5px">Editing</div>
<div class="dd" style="left:1821.5px;top:160.1px"></div>
<div class="sep" style="left:1856px"></div>
<svg class="a" style="left:1866px;top:152px" width="20" height="20" viewBox="0 0 24 24"><path class="ic" d="M12 8l-6 6 1.41 1.41L12 10.83l4.59 4.58L18 14z" /></svg>

<!-- RULER -->
<div class="a" style="left:56px;top:204px;width:1848px;height:1px;background:#c4c7c5"></div>
<div class="a" style="left:649px;top:204px;width:624px;height:1px;background:#5f6368"></div>
<div class="a" style="left:565px;top:200px;width:1px;height:4px;background:#80868b"></div>
<div class="a" style="left:577px;top:200px;width:1px;height:4px;background:#80868b"></div>
<div class="a" style="left:589px;top:200px;width:1px;height:4px;background:#80868b"></div>
<div class="a" style="left:601px;top:196px;width:1px;height:8px;background:#80868b"></div>
<div class="a" style="left:613px;top:200px;width:1px;height:4px;background:#80868b"></div>
<div class="a" style="left:625px;top:200px;width:1px;height:4px;background:#80868b"></div>
<div class="a" style="left:637px;top:200px;width:1px;height:4px;background:#80868b"></div>
<div class="a" style="left:661px;top:200px;width:1px;height:4px;background:#5f6368"></div>
<div class="a" style="left:673px;top:200px;width:1px;height:4px;background:#5f6368"></div>
<div class="a" style="left:685px;top:200px;width:1px;height:4px;background:#5f6368"></div>
<div class="a" style="left:697px;top:196px;width:1px;height:8px;background:#5f6368"></div>
<div class="a" style="left:709px;top:200px;width:1px;height:4px;background:#5f6368"></div>
<div class="a" style="left:721px;top:200px;width:1px;height:4px;background:#5f6368"></div>
<div class="a" style="left:733px;top:200px;width:1px;height:4px;background:#5f6368"></div>
<div class="a" style="left:757px;top:200px;width:1px;height:4px;background:#5f6368"></div>
<div class="a" style="left:769px;top:200px;width:1px;height:4px;background:#5f6368"></div>
<div class="a" style="left:781px;top:200px;width:1px;height:4px;background:#5f6368"></div>
<div class="a" style="left:793px;top:196px;width:1px;height:8px;background:#5f6368"></div>
<div class="a" style="left:805px;top:200px;width:1px;height:4px;background:#5f6368"></div>
<div class="a" style="left:817px;top:200px;width:1px;height:4px;background:#5f6368"></div>
<div class="a" style="left:829px;top:200px;width:1px;height:4px;background:#5f6368"></div>
<div class="a" style="left:853px;top:200px;width:1px;height:4px;background:#5f6368"></div>
<div class="a" style="left:865px;top:200px;width:1px;height:4px;background:#5f6368"></div>
<div class="a" style="left:877px;top:200px;width:1px;height:4px;background:#5f6368"></div>
<div class="a" style="left:889px;top:196px;width:1px;height:8px;background:#5f6368"></div>
<div class="a" style="left:901px;top:200px;width:1px;height:4px;background:#5f6368"></div>
<div class="a" style="left:913px;top:200px;width:1px;height:4px;background:#5f6368"></div>
<div class="a" style="left:925px;top:200px;width:1px;height:4px;background:#5f6368"></div>
<div class="a" style="left:949px;top:200px;width:1px;height:4px;background:#5f6368"></div>
<div class="a" style="left:961px;top:200px;width:1px;height:4px;background:#5f6368"></div>
<div class="a" style="left:973px;top:200px;width:1px;height:4px;background:#5f6368"></div>
<div class="a" style="left:985px;top:196px;width:1px;height:8px;background:#5f6368"></div>
<div class="a" style="left:997px;top:200px;width:1px;height:4px;background:#5f6368"></div>
<div class="a" style="left:1009px;top:200px;width:1px;height:4px;background:#5f6368"></div>
<div class="a" style="left:1021px;top:200px;width:1px;height:4px;background:#5f6368"></div>
<div class="a" style="left:1045px;top:200px;width:1px;height:4px;background:#5f6368"></div>
<div class="a" style="left:1057px;top:200px;width:1px;height:4px;background:#5f6368"></div>
<div class="a" style="left:1069px;top:200px;width:1px;height:4px;background:#5f6368"></div>
<div class="a" style="left:1081px;top:196px;width:1px;height:8px;background:#5f6368"></div>
<div class="a" style="left:1093px;top:200px;width:1px;height:4px;background:#5f6368"></div>
<div class="a" style="left:1105px;top:200px;width:1px;height:4px;background:#5f6368"></div>
<div class="a" style="left:1117px;top:200px;width:1px;height:4px;background:#5f6368"></div>
<div class="a" style="left:1141px;top:200px;width:1px;height:4px;background:#5f6368"></div>
<div class="a" style="left:1153px;top:200px;width:1px;height:4px;background:#5f6368"></div>
<div class="a" style="left:1165px;top:200px;width:1px;height:4px;background:#5f6368"></div>
<div class="a" style="left:1177px;top:196px;width:1px;height:8px;background:#5f6368"></div>
<div class="a" style="left:1189px;top:200px;width:1px;height:4px;background:#5f6368"></div>
<div class="a" style="left:1201px;top:200px;width:1px;height:4px;background:#5f6368"></div>
<div class="a" style="left:1213px;top:200px;width:1px;height:4px;background:#5f6368"></div>
<div class="a" style="left:1237px;top:200px;width:1px;height:4px;background:#5f6368"></div>
<div class="a" style="left:1249px;top:200px;width:1px;height:4px;background:#5f6368"></div>
<div class="a" style="left:1261px;top:200px;width:1px;height:4px;background:#5f6368"></div>
<div class="a" style="left:1273px;top:196px;width:1px;height:8px;background:#5f6368"></div>
<div class="a" style="left:1285px;top:200px;width:1px;height:4px;background:#80868b"></div>
<div class="a" style="left:1297px;top:200px;width:1px;height:4px;background:#80868b"></div>
<div class="a" style="left:1309px;top:200px;width:1px;height:4px;background:#80868b"></div>
<div class="a" style="left:1333px;top:200px;width:1px;height:4px;background:#80868b"></div>
<div class="a" style="left:1345px;top:200px;width:1px;height:4px;background:#80868b"></div>
<div class="a" style="left:1357px;top:200px;width:1px;height:4px;background:#80868b"></div>
<div class="a" style="left:1369px;top:196px;width:1px;height:8px;background:#80868b"></div>
<div class="a" style="left:1369px;top:196px;width:1px;height:8px;background:#80868b"></div>
<div class="a" style="left:548px;top:189px;width:10px;text-align:center;font-size:10.5px;line-height:11px;color:#444746">1</div>
<div class="a" style="left:740px;top:189px;width:10px;text-align:center;font-size:10.5px;line-height:11px;color:#444746">1</div>
<div class="a" style="left:836px;top:189px;width:10px;text-align:center;font-size:10.5px;line-height:11px;color:#444746">2</div>
<div class="a" style="left:932px;top:189px;width:10px;text-align:center;font-size:10.5px;line-height:11px;color:#444746">3</div>
<div class="a" style="left:1028px;top:189px;width:10px;text-align:center;font-size:10.5px;line-height:11px;color:#444746">4</div>
<div class="a" style="left:1124px;top:189px;width:10px;text-align:center;font-size:10.5px;line-height:11px;color:#444746">5</div>
<div class="a" style="left:1220px;top:189px;width:10px;text-align:center;font-size:10.5px;line-height:11px;color:#444746">6</div>
<div class="a" style="left:1316px;top:189px;width:10px;text-align:center;font-size:10.5px;line-height:11px;color:#444746">7</div>
<div class="a" style="left:643px;top:191px;width:12px;height:4px;background:#4285f4"></div>
<svg class="a" style="left:643px;top:196px" width="12" height="7" viewBox="0 0 12 7"><path d="M0 0h12L6 7z" fill="#4285f4"/></svg>
<svg class="a" style="left:1267px;top:196px" width="12" height="7" viewBox="0 0 12 7"><path d="M0 0h12L6 7z" fill="#4285f4"/></svg>
<div class="a" style="left:56px;top:204px;width:1px;height:112px;background:#c4c7c5"></div>
<div class="a" style="left:56px;top:316px;width:1px;height:724px;background:#5f6368"></div>
<div class="a" style="left:52px;top:220px;width:4px;height:1px;background:#80868b"></div>
<div class="a" style="left:52px;top:232px;width:4px;height:1px;background:#80868b"></div>
<div class="a" style="left:52px;top:244px;width:4px;height:1px;background:#80868b"></div>
<div class="a" style="left:52px;top:256px;width:4px;height:1px;background:#80868b"></div>
<div class="a" style="left:48px;top:268px;width:8px;height:1px;background:#80868b"></div>
<div class="a" style="left:52px;top:280px;width:4px;height:1px;background:#80868b"></div>
<div class="a" style="left:52px;top:292px;width:4px;height:1px;background:#80868b"></div>
<div class="a" style="left:52px;top:304px;width:4px;height:1px;background:#80868b"></div>
<div class="a" style="left:48px;top:316px;width:8px;height:1px;background:#5f6368"></div>
<div class="a" style="left:52px;top:328px;width:4px;height:1px;background:#5f6368"></div>
<div class="a" style="left:52px;top:340px;width:4px;height:1px;background:#5f6368"></div>
<div class="a" style="left:52px;top:352px;width:4px;height:1px;background:#5f6368"></div>
<div class="a" style="left:48px;top:364px;width:8px;height:1px;background:#5f6368"></div>
<div class="a" style="left:52px;top:376px;width:4px;height:1px;background:#5f6368"></div>
<div class="a" style="left:52px;top:388px;width:4px;height:1px;background:#5f6368"></div>
<div class="a" style="left:52px;top:400px;width:4px;height:1px;background:#5f6368"></div>
<div class="a" style="left:52px;top:424px;width:4px;height:1px;background:#5f6368"></div>
<div class="a" style="left:52px;top:436px;width:4px;height:1px;background:#5f6368"></div>
<div class="a" style="left:52px;top:448px;width:4px;height:1px;background:#5f6368"></div>
<div class="a" style="left:48px;top:460px;width:8px;height:1px;background:#5f6368"></div>
<div class="a" style="left:52px;top:472px;width:4px;height:1px;background:#5f6368"></div>
<div class="a" style="left:52px;top:484px;width:4px;height:1px;background:#5f6368"></div>
<div class="a" style="left:52px;top:496px;width:4px;height:1px;background:#5f6368"></div>
<div class="a" style="left:52px;top:520px;width:4px;height:1px;background:#5f6368"></div>
<div class="a" style="left:52px;top:532px;width:4px;height:1px;background:#5f6368"></div>
<div class="a" style="left:52px;top:544px;width:4px;height:1px;background:#5f6368"></div>
<div class="a" style="left:48px;top:556px;width:8px;height:1px;background:#5f6368"></div>
<div class="a" style="left:52px;top:568px;width:4px;height:1px;background:#5f6368"></div>
<div class="a" style="left:52px;top:580px;width:4px;height:1px;background:#5f6368"></div>
<div class="a" style="left:52px;top:592px;width:4px;height:1px;background:#5f6368"></div>
<div class="a" style="left:52px;top:616px;width:4px;height:1px;background:#5f6368"></div>
<div class="a" style="left:52px;top:628px;width:4px;height:1px;background:#5f6368"></div>
<div class="a" style="left:52px;top:640px;width:4px;height:1px;background:#5f6368"></div>
<div class="a" style="left:48px;top:652px;width:8px;height:1px;background:#5f6368"></div>
<div class="a" style="left:52px;top:664px;width:4px;height:1px;background:#5f6368"></div>
<div class="a" style="left:52px;top:676px;width:4px;height:1px;background:#5f6368"></div>
<div class="a" style="left:52px;top:688px;width:4px;height:1px;background:#5f6368"></div>
<div class="a" style="left:52px;top:712px;width:4px;height:1px;background:#5f6368"></div>
<div class="a" style="left:52px;top:724px;width:4px;height:1px;background:#5f6368"></div>
<div class="a" style="left:52px;top:736px;width:4px;height:1px;background:#5f6368"></div>
<div class="a" style="left:48px;top:748px;width:8px;height:1px;background:#5f6368"></div>
<div class="a" style="left:52px;top:760px;width:4px;height:1px;background:#5f6368"></div>
<div class="a" style="left:52px;top:772px;width:4px;height:1px;background:#5f6368"></div>
<div class="a" style="left:52px;top:784px;width:4px;height:1px;background:#5f6368"></div>
<div class="a" style="left:52px;top:808px;width:4px;height:1px;background:#5f6368"></div>
<div class="a" style="left:52px;top:820px;width:4px;height:1px;background:#5f6368"></div>
<div class="a" style="left:52px;top:832px;width:4px;height:1px;background:#5f6368"></div>
<div class="a" style="left:48px;top:844px;width:8px;height:1px;background:#5f6368"></div>
<div class="a" style="left:52px;top:856px;width:4px;height:1px;background:#5f6368"></div>
<div class="a" style="left:52px;top:868px;width:4px;height:1px;background:#5f6368"></div>
<div class="a" style="left:52px;top:880px;width:4px;height:1px;background:#5f6368"></div>
<div class="a" style="left:52px;top:904px;width:4px;height:1px;background:#5f6368"></div>
<div class="a" style="left:52px;top:916px;width:4px;height:1px;background:#5f6368"></div>
<div class="a" style="left:52px;top:928px;width:4px;height:1px;background:#5f6368"></div>
<div class="a" style="left:48px;top:940px;width:8px;height:1px;background:#5f6368"></div>
<div class="a" style="left:52px;top:952px;width:4px;height:1px;background:#5f6368"></div>
<div class="a" style="left:52px;top:964px;width:4px;height:1px;background:#5f6368"></div>
<div class="a" style="left:52px;top:976px;width:4px;height:1px;background:#5f6368"></div>
<div class="a" style="left:52px;top:1000px;width:4px;height:1px;background:#5f6368"></div>
<div class="a" style="left:52px;top:1012px;width:4px;height:1px;background:#5f6368"></div>
<div class="a" style="left:52px;top:1024px;width:4px;height:1px;background:#5f6368"></div>
<div class="a" style="left:48px;top:1036px;width:8px;height:1px;background:#5f6368"></div>
<div class="a" style="left:40px;top:215px;width:12px;height:10px;text-align:center;font-size:10.5px;line-height:10px;color:#444746;transform:rotate(-90deg)">1</div>
<div class="a" style="left:40px;top:407px;width:12px;height:10px;text-align:center;font-size:10.5px;line-height:10px;color:#444746;transform:rotate(-90deg)">1</div>
<div class="a" style="left:40px;top:503px;width:12px;height:10px;text-align:center;font-size:10.5px;line-height:10px;color:#444746;transform:rotate(-90deg)">2</div>
<div class="a" style="left:40px;top:599px;width:12px;height:10px;text-align:center;font-size:10.5px;line-height:10px;color:#444746;transform:rotate(-90deg)">3</div>
<div class="a" style="left:40px;top:695px;width:12px;height:10px;text-align:center;font-size:10.5px;line-height:10px;color:#444746;transform:rotate(-90deg)">4</div>
<div class="a" style="left:40px;top:791px;width:12px;height:10px;text-align:center;font-size:10.5px;line-height:10px;color:#444746;transform:rotate(-90deg)">5</div>
<div class="a" style="left:40px;top:887px;width:12px;height:10px;text-align:center;font-size:10.5px;line-height:10px;color:#444746;transform:rotate(-90deg)">6</div>
<div class="a" style="left:40px;top:983px;width:12px;height:10px;text-align:center;font-size:10.5px;line-height:10px;color:#444746;transform:rotate(-90deg)">7</div>
<div class="a" style="left:73px;top:220px;width:36px;height:36px;border-radius:50%;background:#e6eaf1"></div>
<svg class="a" style="left:81px;top:228px" width="20" height="20" viewBox="0 0 24 24"><path class="ic" d="M3 13h2v-2H3v2zm0 4h2v-2H3v2zm0-8h2V7H3v2zm4 4h14v-2H7v2zm0 4h14v-2H7v2zM7 7v2h14V7H7z"/></svg>
<div class="a" style="left:553px;top:220px;width:818px;height:830px;background:#fff;border:1px solid #c7c7c7;border-bottom:none"></div>
<div class="a" style="left:1908px;top:209px;width:8px;height:600px;background:#dadce0;border-radius:4px"></div>
<div class="a" style="left:553px;top:200px;width:1px;height:4px;background:#80868b"></div>
<div class="a" style="left:745px;top:200px;width:1px;height:4px;background:#5f6368"></div>
<div class="a" style="left:841px;top:200px;width:1px;height:4px;background:#5f6368"></div>
<div class="a" style="left:937px;top:200px;width:1px;height:4px;background:#5f6368"></div>
<div class="a" style="left:1033px;top:200px;width:1px;height:4px;background:#5f6368"></div>
<div class="a" style="left:1129px;top:200px;width:1px;height:4px;background:#5f6368"></div>
<div class="a" style="left:1225px;top:200px;width:1px;height:4px;background:#5f6368"></div>
<div class="a" style="left:1321px;top:200px;width:1px;height:4px;background:#80868b"></div>
<div class="doc" style="top:316px">
<section>
<div>Lorem ipsum dolor sit amet, consectetur adipiscing elit. Nulla vitae odio accumsan, maximus lectus</div>
<div>et, cursus mauris. Aliquam mattis convallis lectus in faucibus. Fusce et faucibus ligula. Pellentesque</div>
<div>eu purus fringilla, rutrum est sit amet, efficitur ligula. Suspendisse nec sollicitudin justo, a</div>
<div>pellentesque dolor. Nullam tincidunt accumsan venenatis. Duis porta ligula vel mi venenatis, id</div>
<div>ornare risus rhoncus. Ut sit amet blandit ex, pellentesque porttitor nulla. Phasellus pretium sagittis</div>
<div>turpis vel venenatis. Praesent aliquet mi eget euismod laoreet. Pellentesque condimentum ultrices</div>
<div class="l">justo id vehicula. Fusce ipsum nisi, venenatis at risus et, condimentum auctor enim.</div>
</section>
<section style="margin-top:14.75px">
<div>Vestibulum accumsan lectus a erat iaculis, in efficitur eros consequat. Proin in augue sed urna</div>
<div>feugiat tempus. In convallis placerat lorem vel iaculis. Mauris id ex sed lacus ornare congue sed</div>
<div>eget elit. Pellentesque habitant morbi tristique senectus et netus et malesuada fames ac turpis</div>
<div>egestas. Proin <span class="sq">ultricies</span> nulla nisl, in dapibus nunc sollicitudin vitae. In at quam at mauris pulvinar</div>
<div>venenatis. Curabitur in vulputate nisl. Nulla in lobortis nunc. Vivamus nec bibendum nulla.</div>
<div class="l">Vestibulum et turpis neque.</div>
</section>
<section style="margin-top:14.75px">
<div>Morbi eget est vulputate, ornare sem id, volutpat arcu. Maecenas fermentum orci tortor, in aliquam</div>
<div>felis semper eget. Aenean vitae diam non massa feugiat porta. Suspendisse ut neque egestas,</div>
<div>cursus orci vel, vulputate nulla. Etiam dapibus purus et pellentesque suscipit. Nam at lacus eget</div>
<div>tellus hendrerit scelerisque. Sed eget bibendum sem. Vivamus bibendum lectus a lectus vestibulum,</div>
<div>varius efficitur sem vehicula. Aliquam egestas tempor nisi eu mattis. Proin scelerisque mi ut risus</div>
<div class="l">dapibus, vel bibendum quam rhoncus.</div>
</section>
<section style="margin-top:14.75px">
<div>Proin in tristique eros. Ut at lorem varius, accumsan ex sed, ullamcorper orci. Ut purus justo,</div>
<div>consequat et tristique eget, aliquam in augue. Suspendisse eu odio blandit, finibus quam nec,</div>
<div>pharetra magna. Cras ullamcorper diam id nulla sodales pulvinar. Praesent varius sit amet dolor in</div>
<div>suscipit. Fusce nec suscipit neque, ac semper libero. Curabitur vehicula est vel nisi gravida porta.</div>
<div>Quisque quis urna at mauris malesuada elementum. Aenean <span class="sq">ultrices</span> urna a ultricies facilisis.</div>
<div>Vivamus aliquet odio sed dapibus egestas. Suspendisse placerat quam et purus laoreet, et</div>
<div>bibendum nunc hendrerit. Sed eget feugiat dolor. Praesent a orci non magna placerat vulputate.</div>
<div>Nulla tristique molestie arcu, a pharetra eros accumsan ac. Vivamus sapien diam, ullamcorper a</div>
<div class="l">augue ac, venenatis hendrerit sem.</div>
</section>
<section style="margin-top:14.75px">
<div>Aliquam in fermentum nisl. Sed turpis felis, bibendum in consectetur in, sodales et ipsum. Quisque</div>
<div>maximus, mauris ut porttitor interdum, justo nunc consectetur nunc, in pellentesque lectus leo</div>
<div class="l">dapibus odio. Curabitur vehicula mauris in auctor ornare. Donec n</div>
</section>
</div>
<svg class="a" style="left:0;top:0;pointer-events:none" width="1920" height="1080" viewBox="0 0 1920 1080">
<path d="M747 533 L749.0 531 L751.0 533 L753.0 531 L755.0 533 L757.0 531 L759.0 533 L761.0 531 L763.0 533 L765.0 531 L767.0 533 L769.0 531 L771.0 533 L773.0 531 L775.0 533 L777.0 531 L779.0 533 L781.0 531 L783.0 533 L785.0 531 L787.0 533 L789.0 531 L791.0 533 L793.0 531 L794.0 533" fill="none" stroke="#e8302a" stroke-width="0.9"/>
<path d="M1064 801.3 L1066.0 799.3 L1068.0 801.3 L1070.0 799.3 L1072.0 801.3 L1074.0 799.3 L1076.0 801.3 L1078.0 799.3 L1080.0 801.3 L1082.0 799.3 L1084.0 801.3 L1086.0 799.3 L1088.0 801.3 L1090.0 799.3 L1092.0 801.3 L1094.0 799.3 L1096.0 801.3 L1098.0 799.3 L1100.0 801.3 L1102.0 799.3 L1104.0 801.3 L1106.0 799.3 L1108.0 801.3 L1109.0 799.3" fill="none" stroke="#e8302a" stroke-width="0.9"/>
</svg>
<div class="a" style="left:1351px;top:409px;width:40px;height:128px;background:#f9fbfd;border-radius:20px;box-shadow:0 1px 3px rgba(60,64,67,.3),0 1px 2px rgba(60,64,67,.15)"></div>
<svg class="a" style="left:1359px;top:422px" width="24" height="24" viewBox="0 0 24 24"><path fill="#0b57d0" d="M22 4c0-1.1-.9-2-2-2H4c-1.1 0-1.99.9-1.99 2L2 16c0 1.1.9 2 2 2h14l4 4V4zm-2 13.17L18.83 16H4V4h16v13.17zM13 5h-2v4H7v2h4v4h2v-4h4V9h-4z" transform="translate(24 0) scale(-1 1)"/></svg>
<svg class="a" style="left:1359.5px;top:462px" width="23" height="23" viewBox="0 0 24 24"><path fill="#0b57d0" d="M11.99 2C6.47 2 2 6.48 2 12s4.47 10 9.99 10C17.52 22 22 17.52 22 12S17.52 2 11.99 2zM12 20c-4.42 0-8-3.58-8-8s3.58-8 8-8 8 3.58 8 8-3.58 8-8 8zm3.5-9c.83 0 1.5-.67 1.5-1.5S16.33 8 15.5 8 14 8.67 14 9.5s.67 1.5 1.5 1.5zm-7 0c.83 0 1.5-.67 1.5-1.5S9.33 8 8.5 8 7 8.67 7 9.5 7.67 11 8.5 11zm3.5 6.5c2.33 0 4.31-1.46 5.11-3.5H6.89c.8 2.04 2.78 3.5 5.11 3.5z"/></svg>
<svg class="a" style="left:1359px;top:502px" width="24" height="24" viewBox="0 0 24 24"><path fill="#0b57d0" d="M20 2H4c-1.1 0-1.99.9-1.99 2L2 22l4-4h14c1.1 0 2-.9 2-2V4c0-1.1-.9-2-2-2zm0 14H5.17l-.59.59-.58.58V4h16v12zm-9.5-2H18v-2h-5.5zm3.86-5.87c.2-.2.2-.51 0-.71l-1.77-1.77c-.2-.2-.51-.2-.71 0L6 11.53V14h2.47l5.89-5.87z"/></svg>
<div class="a" style="left:1895px;top:994px;width:36px;height:36px;border-radius:50%;background:#fff;box-shadow:0 1px 3px rgba(60,64,67,.3)"></div>
<svg class="a" style="left:1902px;top:1004px" width="16" height="16" viewBox="0 0 24 24"><path class="ic" d="M15.41 7.41L14 6l-6 6 6 6 1.41-1.41L10.83 12z"/></svg>
<!-- TASKBAR -->
<div class="a" style="left:0;top:1040px;width:1920px;height:40px;background:linear-gradient(90deg,#1f3a44 0%,#213646 45%,#202f44 75%,#1e2a42 100%)"></div>
<svg class="a" style="left:16px;top:1052px" width="16" height="16" viewBox="0 0 16 16"><path d="M0 2.2l6.5-.9v6.3H0zM7.3 1.2L16 0v7.6H7.3zM0 8.4h6.5v6.3L0 13.8zM7.3 8.4H16V16l-8.7-1.2z" fill="#fff"/></svg>
<div class="a" style="left:48px;top:1041px;width:288px;height:39px;background:#2c2c2c;border:1px solid #4a4a4a;border-bottom:none"></div>
<svg class="a" style="left:60px;top:1052px" width="17" height="17" viewBox="0 0 17 17"><circle cx="10.5" cy="6.5" r="5.2" fill="none" stroke="#e8e8e8" stroke-width="1.2"/><path d="M6.8 10.2L1 16" stroke="#e8e8e8" stroke-width="1.3"/></svg>
<div id="tsearch" class="a" style="left:88px;top:1051px;font-size:15px;letter-spacing:-0.25px;line-height:18px;color:#e3e3e3;white-space:nowrap">Type here to search</div>
<svg class="a" style="left:262px;top:1046px" width="68" height="30" viewBox="0 0 68 30"><path d="M26 1.5Q28.8 10.2 37 13Q28.8 15.8 26 24.5Q23.2 15.8 15 13Q23.2 10.2 26 1.5Z" fill="#f9c21a"/><path d="M49.25 11.999999999999998Q50.65 15.999999999999998 55.0 17.4Q50.65 18.799999999999997 49.25 22.799999999999997Q47.85 18.799999999999997 43.5 17.4Q47.85 15.999999999999998 49.25 11.999999999999998Z" fill="#f9c21a"/><path d="M7 17.3Q8.2 20.6 11.5 21.8Q8.2 23.0 7 26.3Q5.8 23.0 2.5 21.8Q5.8 20.6 7 17.3Z" fill="#3aa0f2"/><circle cx="42.6" cy="3.8" r="2" fill="#f06a35"/><circle cx="61.2" cy="23.3" r="1.9" fill="#66c34a"/></svg>
<svg class="a" style="left:350px;top:1050px" width="20" height="20" viewBox="0 0 20 20"><path d="M1.5 3.5h12M1.5 16.5h12" stroke="#fff" stroke-width="1.2"/><rect x="2.5" y="6" width="10" height="8" fill="none" stroke="#fff" stroke-width="1.2"/><rect x="16" y="2" width="1.3" height="16" fill="#fff"/><rect x="15" y="6" width="3" height="3" fill="#fff"/></svg>
<svg class="a" style="left:399px;top:1050px" width="24" height="21" viewBox="0 0 24 21"><path d="M0 2a1 1 0 0 1 1-1h7l2 2h13a1 1 0 0 1 1 1v15a1 1 0 0 1-1 1H1a1 1 0 0 1-1-1z" fill="#f8c44f"/><path d="M0 5h24v14a1 1 0 0 1-1 1H1a1 1 0 0 1-1-1z" fill="#fbd56a"/><path d="M7 12h10v8h-3v-4h-4v4H7z" fill="#3d8fe0"/></svg>
<svg class="a" style="left:448px;top:1048px" width="24" height="24" viewBox="0 0 24 24"><ellipse cx="12" cy="12" rx="10.8" ry="10.8" fill="none" stroke="#e8244b" stroke-width="1.6"/><ellipse cx="12" cy="12" rx="5" ry="9" fill="none" stroke="#e8244b" stroke-width="1.6"/></svg>
<div class="a" style="left:440px;top:1077px;width:40px;height:3px;background:#76d46c"></div>
<svg class="a" style="left:498px;top:1049px" width="23" height="23" viewBox="0 0 23 23"><path d="M1 1h21v14l-7 7H1z" fill="#f8cf14"/><path d="M22 13l-9 9V13z" fill="#3b3b3b"/><path d="M22 13v2l-7 7h-2z" fill="#e8b40c"/></svg>
<svg class="a" style="left:546px;top:1048px" width="24" height="24" viewBox="0 0 24 24"><circle cx="12" cy="12" r="11.3" fill="#161b1e"/><circle cx="12" cy="12.5" r="8.3" fill="#3aa7a6"/><path d="M8.2 5.5q-4 6.5 0 13M15.8 5.5q4 6.5 0 13" stroke="#15191c" stroke-width="1.8" fill="none"/><path d="M12 5.2l2.6 3.3v4l-1 1.5 1 3.5h-5.2l1-3.5-1-1.5v-4z" fill="#6fe3df"/></svg>
<svg class="a" style="left:595px;top:1048px" width="24" height="24" viewBox="0 0 24 24"><circle cx="12" cy="12" r="11.2" fill="#8f2fc4"/><circle cx="12" cy="12" r="8.2" fill="#f4f0f8"/><path d="M12 18.5c-1 0-1.6-.4-1.6-1.2v-2c-1.6-.5-3-1.7-3-4 0-.9.3-1.6.8-2.2-.2-.6-.2-1.5.2-2.4 1 0 1.9.6 2.4 1a6 6 0 0 1 2.4 0c.5-.4 1.4-1 2.4-1 .4.9.4 1.8.2 2.4.5.6.8 1.3.8 2.2 0 2.3-1.4 3.5-3 4v2c0 .8-.6 1.2-1.6 1.2z" fill="#8f2fc4"/></svg>
<svg class="a" style="left:645px;top:1049px" width="22" height="22" viewBox="0 0 22 22"><rect width="22" height="22" fill="#d8d8d8"/><rect x="2" y="2" width="7" height="6" fill="none" stroke="#777" stroke-width="1"/><rect x="11" y="2" width="8" height="6" fill="none" stroke="#777" stroke-width="1"/><rect x="2" y="10" width="7" height="6" fill="none" stroke="#999" stroke-width="1"/><rect x="12" y="11" width="6" height="4" fill="#e02020"/><rect x="13" y="15" width="4" height="4" fill="#111"/><rect x="2" y="17" width="7" height="3" fill="#333"/></svg>
<svg class="a" style="left:693px;top:1048px" width="24" height="24" viewBox="0 0 24 24"><circle cx="12" cy="12" r="11.3" fill="#302e31" stroke="#c8c8c8" stroke-width="1"/><circle cx="12" cy="12" r="9" fill="#1a1a1a"/><path d="M12 4a4 4 0 0 1 2 6.5M6 15a4 4 0 0 1 4.5-4.5M17 16a4 4 0 0 1-6.5 1" stroke="#d8d8d8" stroke-width="2.2" fill="none"/></svg>
<svg class="a" style="left:743px;top:1049px" width="22" height="22" viewBox="0 0 22 22"><circle cx="11" cy="11" r="10.5" fill="#10173a" stroke="#9aa0b8" stroke-width="1"/><path d="M8.5 6.5v9l7-4.5z" fill="none" stroke="#fff" stroke-width="1.6" stroke-linejoin="round"/></svg>
<svg class="a" style="left:790px;top:1047px" width="25" height="25" viewBox="0 0 25 25"><ellipse cx="11" cy="14" rx="10" ry="8" fill="#b7d5ee"/><circle cx="5.5" cy="15" r="1.8" fill="#e64a3c"/><circle cx="7.5" cy="10.5" r="1.8" fill="#7bc043"/><circle cx="12" cy="9" r="1.8" fill="#f3b81f"/><circle cx="11" cy="16" r="1.8" fill="#2e6fd0"/><path d="M22 2l-9 17" stroke="#d88d1a" stroke-width="2.2"/><path d="M22 2l2 1-2 4z" fill="#f5c862"/></svg>
<svg class="a" style="left:839px;top:1051px" width="25" height="18" viewBox="0 0 25 18"><path d="M3 1h14l3 4H3z" fill="#cfcfcf"/><rect x="1" y="5" width="23" height="11" rx="1.5" fill="#e9e9e9"/><rect x="1" y="12" width="23" height="4" fill="#bdbdbd"/></svg>
<svg class="a" style="left:889px;top:1047px" width="26" height="26" viewBox="0 0 26 26"><circle cx="12" cy="11.5" r="11" fill="#5865f2"/><path d="M7 8.5q5-2.5 10 0 1.5 3 1.5 6.5-1.5 1.5-3.5 1.8l-.8-1.3q-2.2.8-4.4 0l-.8 1.3Q7 16.5 5.5 15q0-3.5 1.5-6.5z" fill="#fff"/><circle cx="10" cy="12.3" r="1.2" fill="#5865f2"/><circle cx="14" cy="12.3" r="1.2" fill="#5865f2"/><circle cx="18.5" cy="18.5" r="6.5" fill="#e8474b"/><circle cx="18.5" cy="18.5" r="2.7" fill="#fff"/></svg>
<div class="a" style="left:881px;top:1077px;width:40px;height:3px;background:#76d46c"></div>
<svg class="a" style="left:937px;top:1048px" width="24" height="24" viewBox="0 0 24 24"><path d="M3 6l3-1 1.5-2 3 1.2h3L16.5 3 18 5l3 1v10q-1 4-9 5-8-1-9-5z" fill="#478cbf"/><circle cx="8" cy="12" r="2.6" fill="#fff"/><circle cx="16" cy="12" r="2.6" fill="#fff"/><circle cx="8.3" cy="12.3" r="1.3" fill="#414042"/><circle cx="15.7" cy="12.3" r="1.3" fill="#414042"/><path d="M5 17h14" stroke="#fff" stroke-width="1.3"/><rect x="11.2" y="13.5" width="1.6" height="2.5" fill="#fff"/></svg>
<div class="a" style="left:930px;top:1077px;width:40px;height:3px;background:#76d46c"></div>
<div class="a" style="left:975px;top:1040px;width:48px;height:40px;background:#45565f"></div>
<svg class="a" style="left:986px;top:1048px" width="26" height="24" viewBox="-0.5 -0.5 15 14" shape-rendering="crispEdges"><path d="M3 1h8v1h1v2h-1v2h1v1h1v1h1v5H1v-1h1v-3h1V7H1V4h2z" fill="#e6ece2"/><g fill="#111"><rect x="8" y="0" width="1" height="1"/><rect x="9" y="0" width="1" height="1"/><rect x="3" y="1" width="1" height="1"/><rect x="4" y="1" width="1" height="1"/><rect x="5" y="1" width="1" height="1"/><rect x="6" y="1" width="1" height="1"/><rect x="7" y="1" width="1" height="1"/><rect x="10" y="1" width="1" height="1"/><rect x="2" y="2" width="1" height="1"/><rect x="8" y="2" width="1" height="1"/><rect x="11" y="2" width="1" height="1"/><rect x="2" y="3" width="1" height="1"/><rect x="5" y="3" width="1" height="1"/><rect x="6" y="3" width="1" height="1"/><rect x="9" y="3" width="1" height="1"/><rect x="10" y="3" width="1" height="1"/><rect x="11" y="3" width="1" height="1"/><rect x="0" y="4" width="1" height="1"/><rect x="1" y="4" width="1" height="1"/><rect x="2" y="4" width="1" height="1"/><rect x="5" y="4" width="1" height="1"/><rect x="9" y="4" width="1" height="1"/><rect x="0" y="5" width="1" height="1"/><rect x="1" y="5" width="1" height="1"/><rect x="6" y="5" width="1" height="1"/><rect x="9" y="5" width="1" height="1"/><rect x="10" y="5" width="1" height="1"/><rect x="0" y="6" width="1" height="1"/><rect x="5" y="6" width="1" height="1"/><rect x="8" y="6" width="1" height="1"/><rect x="9" y="6" width="1" height="1"/><rect x="11" y="6" width="1" height="1"/><rect x="1" y="7" width="1" height="1"/><rect x="2" y="7" width="1" height="1"/><rect x="3" y="7" width="1" height="1"/><rect x="4" y="7" width="1" height="1"/><rect x="5" y="7" width="1" height="1"/><rect x="12" y="7" width="1" height="1"/><rect x="3" y="8" width="1" height="1"/><rect x="10" y="8" width="1" height="1"/><rect x="11" y="8" width="1" height="1"/><rect x="13" y="8" width="1" height="1"/><rect x="3" y="9" width="1" height="1"/><rect x="5" y="9" width="1" height="1"/><rect x="13" y="9" width="1" height="1"/><rect x="2" y="10" width="1" height="1"/><rect x="3" y="10" width="1" height="1"/><rect x="5" y="10" width="1" height="1"/><rect x="9" y="10" width="1" height="1"/><rect x="13" y="10" width="1" height="1"/><rect x="1" y="11" width="1" height="1"/><rect x="4" y="11" width="1" height="1"/><rect x="8" y="11" width="1" height="1"/><rect x="13" y="11" width="1" height="1"/><rect x="1" y="12" width="1" height="1"/><rect x="2" y="12" width="1" height="1"/><rect x="3" y="12" width="1" height="1"/><rect x="4" y="12" width="1" height="1"/><rect x="5" y="12" width="1" height="1"/><rect x="6" y="12" width="1" height="1"/><rect x="7" y="12" width="1" height="1"/><rect x="8" y="12" width="1" height="1"/><rect x="9" y="12" width="1" height="1"/><rect x="10" y="12" width="1" height="1"/><rect x="11" y="12" width="1" height="1"/><rect x="12" y="12" width="1" height="1"/></g></svg>
<div class="a" style="left:975px;top:1077px;width:48px;height:3px;background:#76d46c"></div>
<svg class="a" style="left:1504px;top:1048px" width="26" height="26" viewBox="0 0 26 26"><path d="M4 16q6 2 11-3 3-3 3-8 5 5 3 12-3 6-9 6-6 0-8-7z" fill="#f3a536"/><path d="M4 16q6 2 11-3 3-3 3-8 4 5 2 11q-5 4-12 3z" fill="#f6c24f" opacity=".6"/><circle cx="18" cy="5.5" r="5" fill="#d43a2f"/><text x="18" y="8.5" font-size="8" fill="#fff" text-anchor="middle" font-family="Liberation Sans">1</text></svg>
<div id="weather" class="a" style="left:1537px;top:1051px;font-size:14.5px;letter-spacing:-0.3px;line-height:18px;color:#fff;white-space:nowrap">75°F&nbsp;&nbsp;Clear</div>
<svg class="a" style="left:1628px;top:1055px" width="14" height="9" viewBox="0 0 14 9"><path d="M1 8l6-6 6 6" fill="none" stroke="#fff" stroke-width="1.3"/></svg>
<svg class="a" style="left:1651px;top:1052px" width="17" height="16" viewBox="0 0 17 16"><path d="M2.5 5q5-3 10 0 1.5 3.5 1.5 7-1.5 1.5-3.5 1.7l-.8-1.2q-2.2.7-4.4 0l-.8 1.2Q3 13.5 1.5 12q0-3.5 1-7z" fill="#fff"/><circle cx="5.8" cy="9" r="1.2" fill="#1d313d"/><circle cx="9.5" cy="9" r="1.2" fill="#1d313d"/><circle cx="13.5" cy="3" r="2.6" fill="#e8474b"/></svg>
<svg class="a" style="left:1674px;top:1051px" width="18" height="18" viewBox="0 0 18 18"><circle cx="9" cy="9" r="8.5" fill="#1b6fb3"/><circle cx="11.5" cy="6.8" r="2.6" fill="none" stroke="#fff" stroke-width="1.3"/><circle cx="6" cy="11.5" r="2" fill="#fff"/><path d="M0.5 9l5.5 2.5L9.5 8" stroke="#fff" stroke-width="1.5" fill="none"/></svg>
<svg class="a" style="left:1697px;top:1051px" width="20" height="19" viewBox="0 0 20 19"><rect x="1" y="3" width="17" height="12" fill="none" stroke="#fff" stroke-width="1.2"/><path d="M5 12q2-5 7-5l-1-2M12 7l-2 1" stroke="#fff" stroke-width="1.1" fill="none"/><circle cx="15.5" cy="15.5" r="3" fill="#2e8ae6"/></svg>
<svg class="a" style="left:1721px;top:1052px" width="20" height="17" viewBox="0 0 20 17"><rect x="4" y="1" width="15" height="10" fill="none" stroke="#fff" stroke-width="1.1"/><path d="M11.5 11v4M7 15.5h9M1 4v9" stroke="#fff" stroke-width="1.1"/><rect x="0" y="4" width="3" height="3" fill="none" stroke="#fff" stroke-width="1"/></svg>
<svg class="a" style="left:1745px;top:1052px" width="20" height="17" viewBox="0 0 20 17"><path d="M1.5 6h3l4-4v13l-4-4h-3z" fill="none" stroke="#fff" stroke-width="1.1"/><path d="M11 6q1.5 2.5 0 5M13.5 4q3 4.5 0 9M16 2q4.5 6.5 0 13" stroke="#aab" stroke-width="1" fill="none"/></svg>
<div id="eng" class="a" style="left:1773px;top:1052px;font-size:12px;line-height:16px;color:#fff">ENG</div>
<div id="clock" class="a" style="left:1803px;top:1042px;width:64px;text-align:center;font-size:12.5px;line-height:18px;color:#fff">9:58 PM<br>4/28/2025</div>
<svg class="a" style="left:1877px;top:1051px" width="20" height="18" viewBox="0 0 20 18"><path d="M1 1h18v12H8l-4 4v-4H1z" fill="none" stroke="#fff" stroke-width="1.2"/></svg>
<div class="a" style="left:1913px;top:1040px;width:1px;height:40px;background:#5a6a74"></div>

<!-- TAMAGOTCHI -->
<svg class="a" style="left:1700px;top:780px" width="190" height="262" viewBox="0 0 190 262" shape-rendering="crispEdges">
<!-- antenna -->
<path d="M156 6h12v2h2v4h2v20h-2v2h2v50h-22V34h2v-2h-2V12h2v-4h4z" fill="#111"/>
<path d="M158 8h8v2h2v4h2v16h-2v2h-8v-2h-2V14h2v-4h2z" fill="#2a2740"/>
<path d="M154 34h16v48h-16z" fill="#25223a"/>
<path d="M156 24h12v4h-12zM156 40h12v2h-12z" fill="#1a1828"/>
<!-- lower dome -->
<polygon points="18,196 18,207 20.3,214.8 24,220 28.7,224.7 36.6,234.6 45.5,244.5 59.4,254.4 68.3,257.4 70,260 114,260 115.7,257.4 124.6,254.4 138.5,244.5 147.4,234.6 155.3,224.7 160,220 163.7,214.8 166,207 166,196" fill="#111"/>
<polygon points="20,196 20,207 22.3,214.8 26,220 30.7,224.7 38.6,234.6 47.5,244.5 61.4,254.4 70.3,257.4 72,258 112,258 113.7,257.4 122.6,254.4 136.5,244.5 145.4,234.6 153.3,224.7 158,220 161.7,214.8 164,207 164,196" fill="#f8a447"/>
<polygon points="149,228 151,228 143,237 134,246 121,254 114,256 119,251 131,244 141,236" fill="#ec8530"/>
<polyline points="28,205 46,237 138,237 156,205" fill="none" stroke="#111" stroke-width="2"/>
<rect x="44" y="238" width="96" height="2" fill="#f08a30"/>
<rect x="74" y="252" width="36" height="2" fill="#111"/>
<rect x="72" y="254" width="40" height="4" fill="#f08a30"/>
<!-- bottom button -->
<path d="M48 202h90v4h-2v2h-2v2h-2v2h-2v2h-2v2h-2v2h-2v2h-2v2h-2v2h-2v2h-2v2h-2v2H70v-2h-2v-2h-2v-2h-2v-2h-2v-2h-2v-2h-2v-2h-2v-2h-2v-2h-2v-2h-2v-2h-2z" fill="#111"/>
<path d="M52 204h82v2h-2v2h-2v2h-2v2h-2v2h-2v2h-2v2h-2v2h-2v2h-2v2h-2v2H72v-2h-2v-2h-2v-2h-2v-2h-2v-2h-2v-2h-2v-2h-2v-2h-2v-2h-2v-2h-2z" fill="#9aa4b0"/>
<path d="M52 204h2v2h2v2h2v2h2v2h2v2h2v2h2v2h2v2h2v2h2v2h2v2h40v2H72v-2h-2v-2h-2v-2h-2v-2h-2v-2h-2v-2h-2v-2h-2v-2h-2v-2h-2v-2h-2z" fill="#4a5068"/>
<path d="M132 206h2v2h-2v2h-2v2h-2v2h-2v2h-2v2h-2v2h-2v2h-2v2h-2v2h-2v-2h2v-2h2v-2h2v-2h2v-2h2v-2h2v-2h2v-2h2z" fill="#4a5068"/>
<!-- body -->
<path d="M14 82h156v2h2v2h2v2h2v2h2v108h-2v2h-2v2h-2v2h-2v2H14v-2h-2v-2h-2v-2H8v-2H6V90h2v-2h2v-2h2v-2h2z" fill="#111"/>
<path d="M14 84h156v2h2v2h2v2h2v108h-2v2h-2v2h-2v2H14v-2h-2v-2h-2v-2H8V90h2v-2h2v-2h2z" fill="#f8a447"/>
<path d="M172 90h4v108h-4z" fill="#ec8530"/>
<!-- dome -->
<path d="M70 30h44v2h4v2h6v2h4v2h4v2h4v2h4v2h2v2h4v2h2v2h2v4h2v2h2v4h2v4h2v6h2v8h2v4H16v-4h2v-8h2v-6h2v-4h2v-4h2v-2h2v-4h2v-2h2v-2h4v-2h2v-2h4v-2h4v-2h4v-2h4v-2h6v-2h4z" fill="#111"/>
<path d="M70 32h44v2h4v2h6v2h4v2h4v2h4v2h4v2h2v2h4v2h2v2h2v4h2v2h2v4h2v4h2v6h2v8h2v4H18v-4h2v-8h2v-6h2v-4h2v-4h2v-2h2v-4h2v-2h2v-2h4v-2h2v-2h4v-2h4v-2h4v-2h4v-2h6v-2h4z" fill="#f8a447"/>
<path d="M70 32h44v2h4v2h6v2h-60v-2h6z" fill="#fbb761"/>
<path d="M160 70h4v6h2v8h-4v-8h-2zM156 64h4v6h-4z" fill="#ec8530"/>
<!-- top icons -->
<g fill="#ef7a32">
<rect x="44" y="53" width="4" height="2"/><rect x="44" y="53" width="2" height="4"/><rect x="48" y="57" width="2" height="2"/><rect x="50" y="59" width="2" height="2"/><rect x="52" y="61" width="2" height="2"/><rect x="54" y="59" width="2" height="4"/><rect x="52" y="63" width="4" height="2"/>
<path d="M72 52h12v12h-12zM74 56v6h8v-6z" fill-rule="evenodd"/><rect x="76" y="58" width="4" height="2"/>
<path d="M100 52h10v2h2v10h-12zM102 56v2h8v-2zM102 60v2h8v-2z" fill-rule="evenodd"/>
<rect x="132" y="52" width="2" height="7"/><path d="M127 57h2v4h2v2h4v-2h2v-4h2v5h-2v2h-2v2h-4v-2h-2v-2h-2z"/>
</g>
<!-- top buttons -->
<path d="M36 66h24v12h-26v-8h2z" fill="#111"/><path d="M38 68h20v8h-22v-6h2z" fill="#9aa4b0"/>
<path d="M66 66h24v12h-24z" fill="#111"/><path d="M68 68h20v8h-20z" fill="#9aa4b0"/>
<path d="M94 66h24v12h-24z" fill="#111"/><path d="M96 68h20v8h-20z" fill="#9aa4b0"/>
<path d="M122 66h24v4h2v8h-26z" fill="#111"/><path d="M124 68h20v2h2v6h-22z" fill="#9aa4b0"/>
<rect x="30" y="78" width="124" height="2" fill="#111"/>
<!-- side panels -->
<path d="M28 100h2v92h-2v-2h-2v-2h-2v-2h-2v-2h-2v-2h-2v-2h-2v-2h-2V114h2v-2h2v-2h2v-2h2v-2h2v-2h2v-2h2z" fill="#111"/>
<path d="M28 102v88h-2v-2h-2v-2h-2v-2h-2v-2h-2v-2h-2v-2h-2V116h2v-2h2v-2h2v-2h2v-2h2v-2h2v-2z" fill="#9aa4b0"/>
<path d="M14 174h2v2h2v2h2v2h2v2h2v2h2v2h2v2h-2v-2h-2v-2h-2v-2h-2v-2h-2v-2h-2v-2h-2z" fill="#4a5068"/>
<path d="M154 100h2v2h2v2h2v2h2v2h2v2h2v2h2v2h2v62h-2v2h-2v2h-2v2h-2v2h-2v2h-2v2h-2v2h-2v2h-2z" fill="#111"/>
<path d="M156 102h2v2h2v2h2v2h2v2h2v2h2v2h2v60h-2v2h-2v2h-2v2h-2v2h-2v2h-2v2h-2v2h-2z" fill="#9aa4b0"/>
<path d="M168 174h2v2h-2v2h-2v2h-2v2h-2v2h-2v2h-2v2h-2v-2h2v-2h2v-2h2v-2h2v-2h2v-2h2z" fill="#4a5068"/>
<g fill="#3a2a20"><rect x="18" y="92" width="2" height="2"/><rect x="14" y="96" width="2" height="2"/><rect x="22" y="96" width="2" height="2"/><rect x="18" y="100" width="2" height="2"/>
<rect x="165" y="92" width="2" height="2"/><rect x="161" y="96" width="2" height="2"/><rect x="169" y="96" width="2" height="2"/><rect x="165" y="100" width="2" height="2"/>
<rect x="18" y="194" width="2" height="2"/><rect x="14" y="197" width="2" height="2"/><rect x="22" y="197" width="2" height="2"/><rect x="18" y="200" width="2" height="2"/>
<rect x="165" y="194" width="2" height="2"/><rect x="161" y="197" width="2" height="2"/><rect x="169" y="197" width="2" height="2"/><rect x="165" y="200" width="2" height="2"/></g>
<!-- screen -->
<rect x="34" y="86" width="116" height="116" fill="#1b1a28"/>
<rect x="37" y="89" width="110" height="110" fill="#d4dcd3"/>
<rect x="37" y="174" width="110" height="2" fill="#111"/>
<g fill="#111">
<rect x="40" y="91" width="2" height="2"/><rect x="42" y="91" width="2" height="2"/><rect x="46" y="91" width="2" height="2"/><rect x="48" y="91" width="2" height="2"/><rect x="40" y="93" width="2" height="2"/><rect x="42" y="93" width="2" height="2"/><rect x="44" y="93" width="2" height="2"/><rect x="46" y="93" width="2" height="2"/><rect x="48" y="93" width="2" height="2"/><rect x="40" y="95" width="2" height="2"/><rect x="42" y="95" width="2" height="2"/><rect x="44" y="95" width="2" height="2"/><rect x="46" y="95" width="2" height="2"/><rect x="48" y="95" width="2" height="2"/><rect x="42" y="97" width="2" height="2"/><rect x="44" y="97" width="2" height="2"/><rect x="46" y="97" width="2" height="2"/><rect x="44" y="99" width="2" height="2"/><rect x="52" y="91" width="2" height="2"/><rect x="54" y="91" width="2" height="2"/><rect x="58" y="91" width="2" height="2"/><rect x="60" y="91" width="2" height="2"/><rect x="52" y="93" width="2" height="2"/><rect x="54" y="93" width="2" height="2"/><rect x="56" y="93" width="2" height="2"/><rect x="58" y="93" width="2" height="2"/><rect x="60" y="93" width="2" height="2"/><rect x="52" y="95" width="2" height="2"/><rect x="54" y="95" width="2" height="2"/><rect x="56" y="95" width="2" height="2"/><rect x="58" y="95" width="2" height="2"/><rect x="60" y="95" width="2" height="2"/><rect x="54" y="97" width="2" height="2"/><rect x="56" y="97" width="2" height="2"/><rect x="58" y="97" width="2" height="2"/><rect x="56" y="99" width="2" height="2"/><rect x="64" y="91" width="2" height="2"/><rect x="66" y="91" width="2" height="2"/><rect x="70" y="91" width="2" height="2"/><rect x="72" y="91" width="2" height="2"/><rect x="64" y="93" width="2" height="2"/><rect x="66" y="93" width="2" height="2"/><rect x="68" y="93" width="2" height="2"/><rect x="70" y="93" width="2" height="2"/><rect x="72" y="93" width="2" height="2"/><rect x="64" y="95" width="2" height="2"/><rect x="66" y="95" width="2" height="2"/><rect x="68" y="95" width="2" height="2"/><rect x="70" y="95" width="2" height="2"/><rect x="72" y="95" width="2" height="2"/><rect x="66" y="97" width="2" height="2"/><rect x="68" y="97" width="2" height="2"/><rect x="70" y="97" width="2" height="2"/><rect x="68" y="99" width="2" height="2"/><rect x="76" y="91" width="2" height="2"/><rect x="78" y="91" width="2" height="2"/><rect x="82" y="91" width="2" height="2"/><rect x="84" y="91" width="2" height="2"/><rect x="76" y="93" width="2" height="2"/><rect x="80" y="93" width="2" height="2"/><rect x="84" y="93" width="2" height="2"/><rect x="76" y="95" width="2" height="2"/><rect x="84" y="95" width="2" height="2"/><rect x="78" y="97" width="2" height="2"/><rect x="82" y="97" width="2" height="2"/><rect x="80" y="99" width="2" height="2"/><rect x="97" y="91" width="2" height="2"/><rect x="99" y="91" width="2" height="2"/><rect x="103" y="91" width="2" height="2"/><rect x="105" y="91" width="2" height="2"/><rect x="97" y="93" width="2" height="2"/><rect x="101" y="93" width="2" height="2"/><rect x="105" y="93" width="2" height="2"/><rect x="97" y="95" width="2" height="2"/><rect x="105" y="95" width="2" height="2"/><rect x="99" y="97" width="2" height="2"/><rect x="103" y="97" width="2" height="2"/><rect x="101" y="99" width="2" height="2"/><rect x="109" y="91" width="2" height="2"/><rect x="111" y="91" width="2" height="2"/><rect x="115" y="91" width="2" height="2"/><rect x="117" y="91" width="2" height="2"/><rect x="109" y="93" width="2" height="2"/><rect x="111" y="93" width="2" height="2"/><rect x="113" y="93" width="2" height="2"/><rect x="115" y="93" width="2" height="2"/><rect x="117" y="93" width="2" height="2"/><rect x="109" y="95" width="2" height="2"/><rect x="111" y="95" width="2" height="2"/><rect x="113" y="95" width="2" height="2"/><rect x="115" y="95" width="2" height="2"/><rect x="117" y="95" width="2" height="2"/><rect x="111" y="97" width="2" height="2"/><rect x="113" y="97" width="2" height="2"/><rect x="115" y="97" width="2" height="2"/><rect x="113" y="99" width="2" height="2"/><rect x="121" y="91" width="2" height="2"/><rect x="123" y="91" width="2" height="2"/><rect x="127" y="91" width="2" height="2"/><rect x="129" y="91" width="2" height="2"/><rect x="121" y="93" width="2" height="2"/><rect x="123" y="93" width="2" height="2"/><rect x="125" y="93" width="2" height="2"/><rect x="127" y="93" width="2" height="2"/><rect x="129" y="93" width="2" height="2"/><rect x="121" y="95" width="2" height="2"/><rect x="123" y="95" width="2" height="2"/><rect x="125" y="95" width="2" height="2"/><rect x="127" y="95" width="2" height="2"/><rect x="129" y="95" width="2" height="2"/><rect x="123" y="97" width="2" height="2"/><rect x="125" y="97" width="2" height="2"/><rect x="127" y="97" width="2" height="2"/><rect x="125" y="99" width="2" height="2"/><rect x="133" y="91" width="2" height="2"/><rect x="135" y="91" width="2" height="2"/><rect x="139" y="91" width="2" height="2"/><rect x="141" y="91" width="2" height="2"/><rect x="133" y="93" width="2" height="2"/><rect x="135" y="93" width="2" height="2"/><rect x="137" y="93" width="2" height="2"/><rect x="139" y="93" width="2" height="2"/><rect x="141" y="93" width="2" height="2"/><rect x="133" y="95" width="2" height="2"/><rect x="135" y="95" width="2" height="2"/><rect x="137" y="95" width="2" height="2"/><rect x="139" y="95" width="2" height="2"/><rect x="141" y="95" width="2" height="2"/><rect x="135" y="97" width="2" height="2"/><rect x="137" y="97" width="2" height="2"/><rect x="139" y="97" width="2" height="2"/><rect x="137" y="99" width="2" height="2"/>
<path d="M56 103h2v2h-2v2h-2v4h-2v2h-2v2h-2v2h-4v2h-2v-2h-2v-2h2v-6h2v-2h2v-2h6v-2h2z"/>
<g transform="translate(-2 4)"><path d="M136 98h2v6h-2zM136 110h2v6h-2zM128 106h6v2h-6zM140 106h6v2h-6zM130 100h2v2h2v2h-2v-2h-2zM142 100h2v2h-2v2h-2v-2h2zM130 114h2v-2h2v-2h-2v2h-2zM142 114h2v-2h-2v-2h-2v2h2z"/>
<path d="M134 104h6v6h-6zM135 105v4h4v-4z" fill-rule="evenodd"/></g>
<rect x="101" y="144" width="2" height="2"/><rect x="103" y="144" width="2" height="2"/><rect x="91" y="146" width="2" height="2"/><rect x="93" y="146" width="2" height="2"/><rect x="95" y="146" width="2" height="2"/><rect x="97" y="146" width="2" height="2"/><rect x="99" y="146" width="2" height="2"/><rect x="105" y="146" width="2" height="2"/><rect x="89" y="148" width="2" height="2"/><rect x="101" y="148" width="2" height="2"/><rect x="107" y="148" width="2" height="2"/><rect x="89" y="150" width="2" height="2"/><rect x="95" y="150" width="2" height="2"/><rect x="97" y="150" width="2" height="2"/><rect x="103" y="150" width="2" height="2"/><rect x="105" y="150" width="2" height="2"/><rect x="107" y="150" width="2" height="2"/><rect x="85" y="152" width="2" height="2"/><rect x="87" y="152" width="2" height="2"/><rect x="89" y="152" width="2" height="2"/><rect x="95" y="152" width="2" height="2"/><rect x="103" y="152" width="2" height="2"/><rect x="85" y="154" width="2" height="2"/><rect x="87" y="154" width="2" height="2"/><rect x="97" y="154" width="2" height="2"/><rect x="103" y="154" width="2" height="2"/><rect x="105" y="154" width="2" height="2"/><rect x="85" y="156" width="2" height="2"/><rect x="95" y="156" width="2" height="2"/><rect x="101" y="156" width="2" height="2"/><rect x="103" y="156" width="2" height="2"/><rect x="107" y="156" width="2" height="2"/><rect x="87" y="158" width="2" height="2"/><rect x="89" y="158" width="2" height="2"/><rect x="91" y="158" width="2" height="2"/><rect x="93" y="158" width="2" height="2"/><rect x="95" y="158" width="2" height="2"/><rect x="109" y="158" width="2" height="2"/><rect x="91" y="160" width="2" height="2"/><rect x="105" y="160" width="2" height="2"/><rect x="107" y="160" width="2" height="2"/><rect x="111" y="160" width="2" height="2"/><rect x="91" y="162" width="2" height="2"/><rect x="95" y="162" width="2" height="2"/><rect x="111" y="162" width="2" height="2"/><rect x="89" y="164" width="2" height="2"/><rect x="91" y="164" width="2" height="2"/><rect x="95" y="164" width="2" height="2"/><rect x="103" y="164" width="2" height="2"/><rect x="111" y="164" width="2" height="2"/><rect x="87" y="166" width="2" height="2"/><rect x="93" y="166" width="2" height="2"/><rect x="101" y="166" width="2" height="2"/><rect x="111" y="166" width="2" height="2"/><rect x="87" y="168" width="2" height="2"/><rect x="89" y="168" width="2" height="2"/><rect x="91" y="168" width="2" height="2"/><rect x="93" y="168" width="2" height="2"/><rect x="95" y="168" width="2" height="2"/><rect x="97" y="168" width="2" height="2"/><rect x="99" y="168" width="2" height="2"/><rect x="101" y="168" width="2" height="2"/><rect x="103" y="168" width="2" height="2"/><rect x="105" y="168" width="2" height="2"/><rect x="107" y="168" width="2" height="2"/><rect x="109" y="168" width="2" height="2"/>
<path d="M64 180h2v2h-2v2h-2v4h-2v2h-2v2h-2v2h-4v2h-2v-2h-2v-2h2v-6h2v-2h2v-2h6v-2h2z"/>
<path d="M92 178h2v6h-2zM92 190h2v6h-2zM84 186h6v2h-6zM96 186h6v2h-6zM86 180h2v2h2v2h-2v-2h-2zM98 180h2v2h-2v2h-2v-2h2zM86 194h2v-2h2v-2h-2v2h-2zM98 194h2v-2h-2v-2h-2v2h2z"/>
<path d="M90 184h6v6h-6zM91 185v4h4v-4z" fill-rule="evenodd"/>
<path d="M122 178h14v2h2v14h-2v2h-14v-2h-2v-14h2zM122 180v14h14v-14z" fill-rule="evenodd"/>
<rect x="124" y="182" width="10" height="2"/><rect x="124" y="186" width="6" height="2"/><rect x="131" y="186" width="3" height="2"/><rect x="124" y="190" width="3" height="2"/><rect x="128" y="190" width="6" height="2"/>
</g>
<rect x="45" y="109" width="2" height="2" fill="#d4dcd3"/><rect x="53" y="187" width="2" height="2" fill="#d4dcd3"/>
</svg>

<div class="a" style="left:52px;top:412px;width:4px;height:1px;background:#5f6368"></div>
<div class="a" style="left:52px;top:508px;width:4px;height:1px;background:#5f6368"></div>
<div class="a" style="left:52px;top:604px;width:4px;height:1px;background:#5f6368"></div>
<div class="a" style="left:52px;top:700px;width:4px;height:1px;background:#5f6368"></div>
<div class="a" style="left:52px;top:796px;width:4px;height:1px;background:#5f6368"></div>
<div class="a" style="left:52px;top:892px;width:4px;height:1px;background:#5f6368"></div>
<div class="a" style="left:52px;top:988px;width:4px;height:1px;background:#5f6368"></div>
</body></html>
